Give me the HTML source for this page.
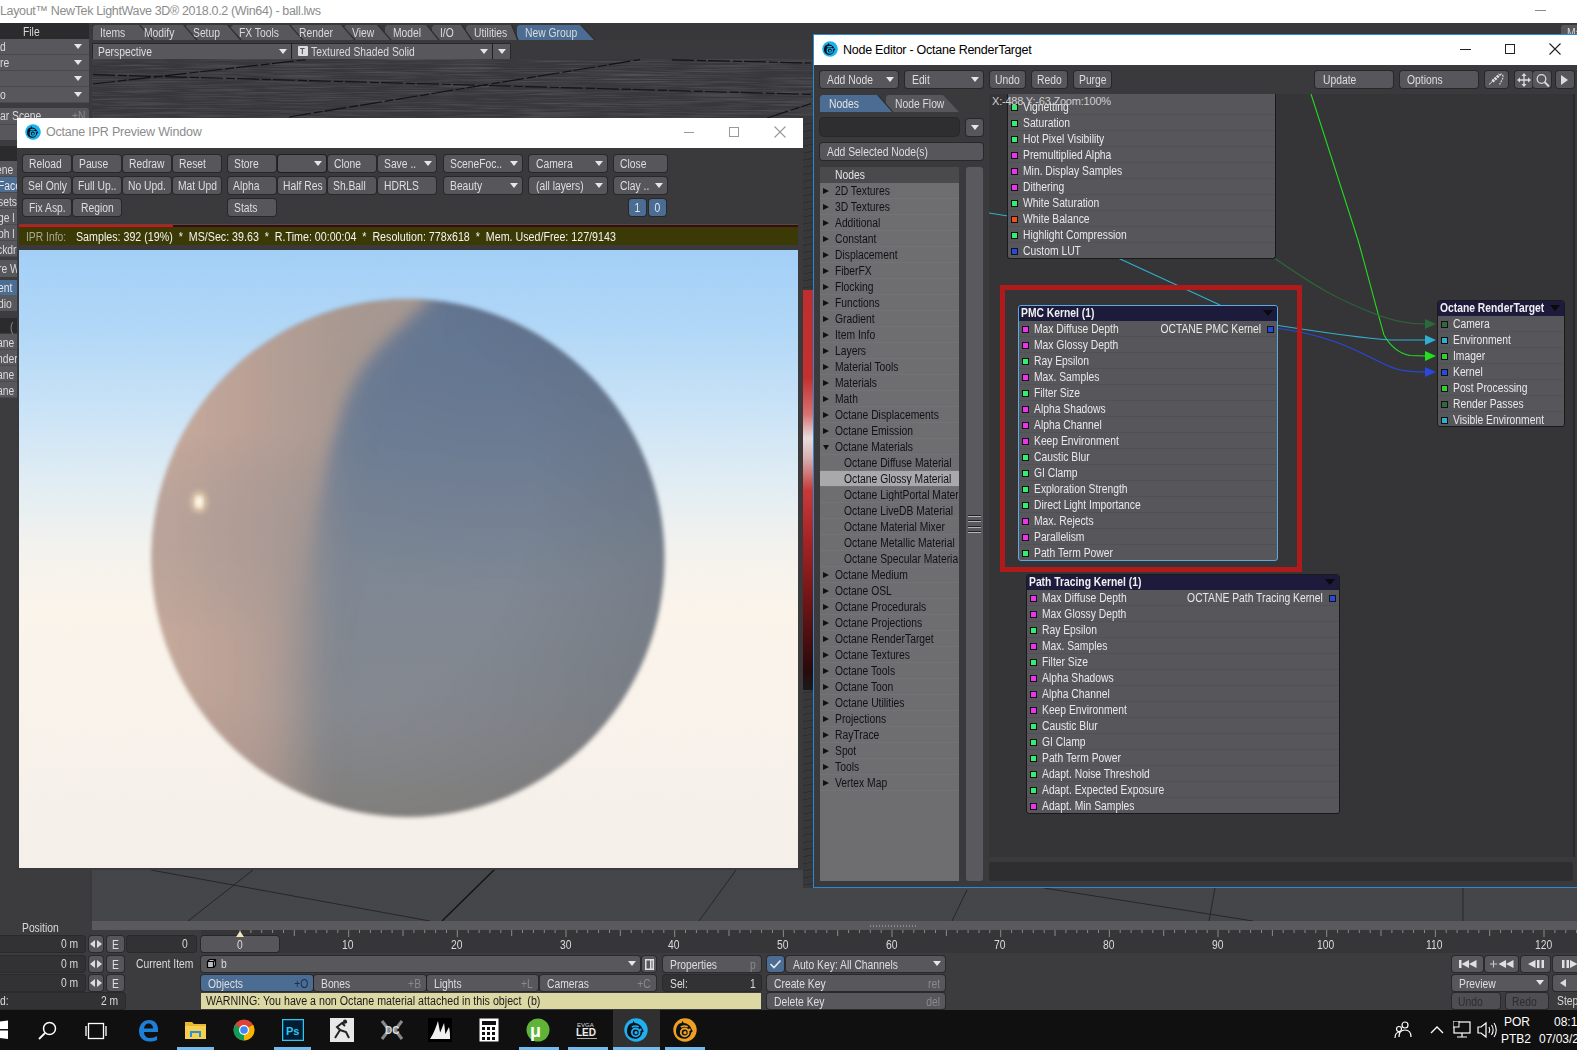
<!DOCTYPE html><html><head><meta charset="utf-8"><style>
*{margin:0;padding:0;box-sizing:border-box}
html,body{width:1577px;height:1050px;overflow:hidden;background:#3c3b3e;font-family:"Liberation Sans",sans-serif;font-size:12px;color:#dcdcdc;position:relative}
.ab{position:absolute}
.btn{position:absolute;background:#545457;border-radius:3px;white-space:nowrap;overflow:hidden;box-shadow:0 0 0 1px rgba(20,20,22,.45)}
.bl{position:absolute;top:0;white-space:nowrap}
.arr{position:absolute;width:0;height:0;border-left:4.5px solid transparent;border-right:4.5px solid transparent;border-top:5px solid #e6e6e6}
.t{position:absolute;white-space:nowrap;line-height:1}
</style></head><body>

<div class="ab" style="left:0px;top:0px;width:1577px;height:23px;background:#fff;"></div>
<div class="t" style="left:0px;top:5px;font-size:12.5px;color:#8c8c8c;letter-spacing:-0.35px">Layout™ NewTek LightWave 3D® 2018.0.2 (Win64) - ball.lws</div>
<div class="ab" style="left:1535px;top:10px;width:11px;height:1px;background:#8a8a8a;"></div>
<div class="ab" style="left:0px;top:23px;width:1577px;height:987px;background:#3c3b3e;"></div>
<div class="ab" style="left:89px;top:23px;width:1488px;height:17px;background:#38373a;"></div>
<div class="ab" style="left:517px;top:25px;width:79px;height:15px;background:#2e2d30;clip-path:polygon(0 2px,2px 0,64.5px 0,78.8px 100%,0 100%)"></div>
<div class="ab" style="left:517px;top:25px;width:79px;height:15px;background:#4b6c93;clip-path:polygon(0 2px,2px 0,63px 0,77px 100%,0 100%)"></div>
<div class="ab" style="left:466px;top:25px;width:53px;height:15px;background:#2e2d30;clip-path:polygon(0 2px,2px 0,46.5px 0,52.8px 100%,0 100%)"></div>
<div class="ab" style="left:466px;top:25px;width:53px;height:15px;background:#58575c;clip-path:polygon(0 2px,2px 0,45px 0,51px 100%,0 100%)"></div>
<div class="ab" style="left:432px;top:25px;width:41px;height:15px;background:#2e2d30;clip-path:polygon(0 2px,2px 0,30.5px 0,40.8px 100%,0 100%)"></div>
<div class="ab" style="left:432px;top:25px;width:41px;height:15px;background:#58575c;clip-path:polygon(0 2px,2px 0,29px 0,39px 100%,0 100%)"></div>
<div class="ab" style="left:385px;top:25px;width:55px;height:15px;background:#2e2d30;clip-path:polygon(0 2px,2px 0,42.5px 0,54.8px 100%,0 100%)"></div>
<div class="ab" style="left:385px;top:25px;width:55px;height:15px;background:#58575c;clip-path:polygon(0 2px,2px 0,41px 0,53px 100%,0 100%)"></div>
<div class="ab" style="left:344px;top:25px;width:48px;height:15px;background:#2e2d30;clip-path:polygon(0 2px,2px 0,34.5px 0,47.8px 100%,0 100%)"></div>
<div class="ab" style="left:344px;top:25px;width:48px;height:15px;background:#58575c;clip-path:polygon(0 2px,2px 0,33px 0,46px 100%,0 100%)"></div>
<div class="ab" style="left:290px;top:25px;width:66px;height:15px;background:#2e2d30;clip-path:polygon(0 2px,2px 0,52.5px 0,65.8px 100%,0 100%)"></div>
<div class="ab" style="left:290px;top:25px;width:66px;height:15px;background:#58575c;clip-path:polygon(0 2px,2px 0,51px 0,64px 100%,0 100%)"></div>
<div class="ab" style="left:231px;top:25px;width:73px;height:15px;background:#2e2d30;clip-path:polygon(0 2px,2px 0,59.5px 0,72.8px 100%,0 100%)"></div>
<div class="ab" style="left:231px;top:25px;width:73px;height:15px;background:#58575c;clip-path:polygon(0 2px,2px 0,58px 0,71px 100%,0 100%)"></div>
<div class="ab" style="left:185px;top:25px;width:57px;height:15px;background:#2e2d30;clip-path:polygon(0 2px,2px 0,43.5px 0,56.8px 100%,0 100%)"></div>
<div class="ab" style="left:185px;top:25px;width:57px;height:15px;background:#58575c;clip-path:polygon(0 2px,2px 0,42px 0,55px 100%,0 100%)"></div>
<div class="ab" style="left:136px;top:25px;width:62px;height:15px;background:#2e2d30;clip-path:polygon(0 2px,2px 0,48.5px 0,61.8px 100%,0 100%)"></div>
<div class="ab" style="left:136px;top:25px;width:62px;height:15px;background:#58575c;clip-path:polygon(0 2px,2px 0,47px 0,60px 100%,0 100%)"></div>
<div class="ab" style="left:93px;top:25px;width:61px;height:15px;background:#2e2d30;clip-path:polygon(0 2px,2px 0,47.5px 0,60.8px 100%,0 100%)"></div>
<div class="ab" style="left:93px;top:25px;width:61px;height:15px;background:#58575c;clip-path:polygon(0 2px,2px 0,46px 0,59px 100%,0 100%)"></div>
<div class="t" style="left:100px;top:27px;font-size:12px;color:#dadada;transform:scaleX(0.86);transform-origin:0 0;">Items</div>
<div class="t" style="left:144px;top:27px;font-size:12px;color:#dadada;transform:scaleX(0.86);transform-origin:0 0;">Modify</div>
<div class="t" style="left:193px;top:27px;font-size:12px;color:#dadada;transform:scaleX(0.86);transform-origin:0 0;">Setup</div>
<div class="t" style="left:239px;top:27px;font-size:12px;color:#dadada;transform:scaleX(0.86);transform-origin:0 0;">FX Tools</div>
<div class="t" style="left:299px;top:27px;font-size:12px;color:#dadada;transform:scaleX(0.86);transform-origin:0 0;">Render</div>
<div class="t" style="left:352px;top:27px;font-size:12px;color:#dadada;transform:scaleX(0.86);transform-origin:0 0;">View</div>
<div class="t" style="left:393px;top:27px;font-size:12px;color:#dadada;transform:scaleX(0.86);transform-origin:0 0;">Model</div>
<div class="t" style="left:440px;top:27px;font-size:12px;color:#dadada;transform:scaleX(0.86);transform-origin:0 0;">I/O</div>
<div class="t" style="left:474px;top:27px;font-size:12px;color:#dadada;transform:scaleX(0.86);transform-origin:0 0;">Utilities</div>
<div class="t" style="left:525px;top:27px;font-size:12px;color:#dadada;transform:scaleX(0.86);transform-origin:0 0;">New Group</div>
<div class="ab" style="left:1561px;top:25px;width:20px;height:9px;background:#58575c;border-radius:3px 0 0 0;overflow:hidden"><div class="t" style="left:6px;top:2px;font-size:12px;color:#dadada;transform:scaleX(.86);transform-origin:0 0">Ma</div></div>
<div class="ab" style="left:89px;top:40px;width:1488px;height:19px;background:#3a393c;"></div>
<div class="btn" style="left:93px;top:44px;width:198px;height:15px;background:#58575c;border-radius:0"><span class="bl" style="left:5px;line-height:15px;padding-top:1px;font-size:12px;color:#dedede;transform:scaleX(.86);transform-origin:0 0">Perspective</span><span class="arr" style="right:4px;top:5px"></span></div>
<div class="btn" style="left:292px;top:44px;width:200px;height:15px;background:#58575c;border-radius:0"><span class="arr" style="right:4px;top:5px"></span></div>
<div class="ab" style="left:298px;top:46px;width:10px;height:10px;background:#dcdcdc;border-radius:1px"></div>
<div class="t" style="left:300px;top:47px;font-size:9px;color:#58575c;transform:scaleX(0.86);transform-origin:0 0;font-weight:bold">T</div>
<div class="t" style="left:311px;top:46px;font-size:12px;color:#dadada;transform:scaleX(0.86);transform-origin:0 0;">Textured Shaded Solid</div>
<div class="btn" style="left:493px;top:44px;width:17px;height:15px;background:#58575c;border-radius:0"><span class="arr" style="right:4px;top:5px"></span></div>
<div class="ab" style="left:92px;top:59px;width:1485px;height:862px;background:linear-gradient(#333336 0px,#38393b 60px,#3d3e41 400px,#45464a 862px)"></div>
<svg class="ab" style="left:92px;top:59px" width="721" height="60"><defs><filter id="vt" x="0" y="0" width="100%" height="100%"><feTurbulence type="turbulence" baseFrequency="0.012 0.45" numOctaves="2" seed="7"/><feColorMatrix values="0 0 0 0 0.13  0 0 0 0 0.13  0 0 0 0 0.14  0 0 0 0.9 -0.1"/></filter></defs><rect width="721" height="60" fill="#38373b"/><rect width="721" height="60" filter="url(#vt)"/></svg>
<div class="ab" style="left:803px;top:118px;width:10px;height:770px;background:repeating-linear-gradient(170deg,#38383b 0 6px,#2e2e31 6px 7px)"></div>
<svg class="ab" style="left:92px;top:59px" width="721" height="60"><g stroke="#141416" stroke-width="1.2" fill="none" stroke-dasharray="22 3 9 2"><path d="M1 25 L215 0.6"/><path d="M1 15.7 L719 35.4"/><path d="M197 58 L548 0.6"/><path d="M580 0.8 L719 4"/><path d="M675 59 L719 44.6"/></g></svg>
<svg class="ab" style="left:92px;top:860px" width="1485" height="62"><g stroke="#26262a" stroke-width="1" fill="none"><path d="M59 10 L338 61"/><path d="M161 10 L96 61"/><path d="M644 10 L607 61"/><path d="M875 30 L860 61"/><path d="M952 28 L1161 61"/><path d="M1123 28 L1117 61"/><path d="M1371 28 L1371 61"/></g><g stroke="#111113" stroke-width="1.3" fill="none"><path d="M403 9 L350 61"/></g></svg>
<div class="ab" style="left:0px;top:23px;width:89px;height:16px;background:#2b2a2d;"></div>
<div class="t" style="left:23px;top:26px;font-size:12px;color:#d8d8d8;transform:scaleX(0.86);transform-origin:0 0;">File</div>
<div class="ab" style="left:0px;top:39px;width:89px;height:16px;background:#58575c;border-bottom:1px solid #4a494e"></div>
<div class="t" style="left:0px;top:41px;font-size:12px;color:#dadada;transform:scaleX(0.86);transform-origin:0 0;">d</div>
<span class="arr ab" style="left:74px;top:44px"></span>
<div class="ab" style="left:0px;top:55px;width:89px;height:16px;background:#58575c;border-bottom:1px solid #4a494e"></div>
<div class="t" style="left:0px;top:57px;font-size:12px;color:#dadada;transform:scaleX(0.86);transform-origin:0 0;">re</div>
<span class="arr ab" style="left:74px;top:60px"></span>
<div class="ab" style="left:0px;top:71px;width:89px;height:16px;background:#58575c;border-bottom:1px solid #4a494e"></div>
<div class="t" style="left:0px;top:73px;font-size:12px;color:#dadada;transform:scaleX(0.86);transform-origin:0 0;"></div>
<span class="arr ab" style="left:74px;top:76px"></span>
<div class="ab" style="left:0px;top:87px;width:89px;height:16px;background:#58575c;border-bottom:1px solid #4a494e"></div>
<div class="t" style="left:0px;top:89px;font-size:12px;color:#dadada;transform:scaleX(0.86);transform-origin:0 0;">o</div>
<span class="arr ab" style="left:74px;top:92px"></span>
<div class="ab" style="left:0px;top:103px;width:89px;height:5px;background:#3c3b3e;"></div>
<div class="ab" style="left:0px;top:108px;width:89px;height:16px;background:#58575c;border-radius:0 3px 3px 0"></div>
<div class="t" style="left:0px;top:110px;font-size:12px;color:#dadada;transform:scaleX(0.86);transform-origin:0 0;">ar Scene</div>
<div class="t" style="left:72px;top:110px;font-size:12px;color:#8a8a8c;transform:scaleX(0.86);transform-origin:0 0;">+N</div>
<div class="ab" style="left:0px;top:124px;width:89px;height:16px;background:#58575c;border-top:1px solid #4a494e"></div>
<div class="ab" style="left:0px;top:146px;width:17px;height:15px;background:#2b2a2d;"></div>
<div class="ab" style="left:0px;top:161px;width:17px;height:16px;background:#58575c;border-bottom:1px solid #4a494e"></div>
<div class="ab" style="left:0px;top:177px;width:17px;height:16px;background:#4b6c93;border-bottom:1px solid #4a494e"></div>
<div class="ab" style="left:0px;top:193px;width:17px;height:16px;background:#58575c;border-bottom:1px solid #4a494e"></div>
<div class="ab" style="left:0px;top:209px;width:17px;height:16px;background:#58575c;border-bottom:1px solid #4a494e"></div>
<div class="ab" style="left:0px;top:225px;width:17px;height:16px;background:#58575c;border-bottom:1px solid #4a494e"></div>
<div class="ab" style="left:0px;top:241px;width:17px;height:16px;background:#58575c;border-bottom:1px solid #4a494e"></div>
<div class="ab" style="left:0px;top:260px;width:17px;height:17px;background:#58575c;"></div>
<div class="ab" style="left:0px;top:280px;width:17px;height:15px;background:#4b6c93;"></div>
<div class="ab" style="left:0px;top:295px;width:17px;height:16px;background:#58575c;"></div>
<div class="ab" style="left:0px;top:318px;width:17px;height:15px;background:#2b2a2d;"></div>
<div class="ab" style="left:0px;top:334px;width:17px;height:16px;background:#58575c;border-bottom:1px solid #4a494e"></div>
<div class="ab" style="left:0px;top:350px;width:17px;height:16px;background:#58575c;border-bottom:1px solid #4a494e"></div>
<div class="ab" style="left:0px;top:366px;width:17px;height:16px;background:#58575c;border-bottom:1px solid #4a494e"></div>
<div class="ab" style="left:0px;top:382px;width:17px;height:16px;background:#58575c;border-bottom:1px solid #4a494e"></div>
<div class="ab" style="left:89px;top:23px;width:3px;height:898px;background:#3a393c;"></div>
<div class="t" style="left:-4px;top:164px;font-size:12px;color:#dadada;transform:scaleX(0.86);transform-origin:0 0;">ene</div>
<div class="t" style="left:-2px;top:180px;font-size:12px;color:#e8e8e8;transform:scaleX(0.86);transform-origin:0 0;">Face</div>
<div class="t" style="left:-2px;top:196px;font-size:12px;color:#dadada;transform:scaleX(0.86);transform-origin:0 0;">sets</div>
<div class="t" style="left:-2px;top:212px;font-size:12px;color:#dadada;transform:scaleX(0.86);transform-origin:0 0;">ge l</div>
<div class="t" style="left:-2px;top:228px;font-size:12px;color:#dadada;transform:scaleX(0.86);transform-origin:0 0;">ph l</div>
<div class="t" style="left:-3px;top:244px;font-size:12px;color:#dadada;transform:scaleX(0.86);transform-origin:0 0;">ckdr</div>
<div class="t" style="left:-2px;top:263px;font-size:12px;color:#dadada;transform:scaleX(0.86);transform-origin:0 0;">re W</div>
<div class="t" style="left:-2px;top:282px;font-size:12px;color:#e8e8e8;transform:scaleX(0.86);transform-origin:0 0;">ent</div>
<div class="t" style="left:-2px;top:298px;font-size:12px;color:#dadada;transform:scaleX(0.86);transform-origin:0 0;">dio</div>
<div class="t" style="left:10px;top:321px;font-size:12px;color:#8a8a8a;transform:scaleX(0.86);transform-origin:0 0;">(</div>
<div class="t" style="left:-3px;top:353px;font-size:12px;color:#dadada;transform:scaleX(0.86);transform-origin:0 0;">nder</div>
<div class="t" style="left:-3px;top:337px;font-size:12px;color:#dadada;transform:scaleX(0.86);transform-origin:0 0;">ane</div>
<div class="t" style="left:-3px;top:369px;font-size:12px;color:#dadada;transform:scaleX(0.86);transform-origin:0 0;">ane</div>
<div class="t" style="left:-3px;top:385px;font-size:12px;color:#dadada;transform:scaleX(0.86);transform-origin:0 0;">ane</div>
<div class="ab" style="left:92px;top:921px;width:1485px;height:9px;background:#5a595e;"></div>
<div class="ab" style="left:870px;top:925px;width:46px;height:2px;background:repeating-linear-gradient(90deg,#8a8a8c 0 1px,transparent 1px 3px)"></div>
<div class="ab" style="left:0px;top:930px;width:1577px;height:80px;background:#3c3b3e;"></div>
<div class="t" style="left:22px;top:922px;font-size:12px;color:#dadada;transform:scaleX(0.86);transform-origin:0 0;">Position</div>
<div class="btn" style="left:0px;top:936px;width:85px;height:16px;background:#323134;border-radius:0 3px 3px 0"></div>
<div class="t" style="left:61px;top:938px;font-size:12px;color:#dadada;transform:scaleX(0.86);transform-origin:0 0;">0 m</div>
<div class="btn" style="left:89px;top:936px;width:14px;height:16px;background:#57565b;"></div>
<svg class="ab" style="left:90px;top:940px" width="12" height="8"><path d="M0 4 L5 0 L5 8Z M12 4 L7 0 L7 8Z" fill="#dcdcdc"/></svg>
<div class="btn" style="left:107px;top:936px;width:17px;height:16px;background:#57565b;"><span class="bl" style="left:0;right:0;text-align:center;line-height:16px;padding-top:1px;font-size:12px;color:#dedede;transform:scaleX(.86)">E</span></div>
<div class="btn" style="left:0px;top:956px;width:85px;height:16px;background:#323134;border-radius:0 3px 3px 0"></div>
<div class="t" style="left:61px;top:958px;font-size:12px;color:#dadada;transform:scaleX(0.86);transform-origin:0 0;">0 m</div>
<div class="btn" style="left:89px;top:956px;width:14px;height:16px;background:#57565b;"></div>
<svg class="ab" style="left:90px;top:960px" width="12" height="8"><path d="M0 4 L5 0 L5 8Z M12 4 L7 0 L7 8Z" fill="#dcdcdc"/></svg>
<div class="btn" style="left:107px;top:956px;width:17px;height:16px;background:#57565b;"><span class="bl" style="left:0;right:0;text-align:center;line-height:16px;padding-top:1px;font-size:12px;color:#dedede;transform:scaleX(.86)">E</span></div>
<div class="btn" style="left:0px;top:975px;width:85px;height:16px;background:#323134;border-radius:0 3px 3px 0"></div>
<div class="t" style="left:61px;top:977px;font-size:12px;color:#dadada;transform:scaleX(0.86);transform-origin:0 0;">0 m</div>
<div class="btn" style="left:89px;top:975px;width:14px;height:16px;background:#57565b;"></div>
<svg class="ab" style="left:90px;top:979px" width="12" height="8"><path d="M0 4 L5 0 L5 8Z M12 4 L7 0 L7 8Z" fill="#dcdcdc"/></svg>
<div class="btn" style="left:107px;top:975px;width:17px;height:16px;background:#57565b;"><span class="bl" style="left:0;right:0;text-align:center;line-height:16px;padding-top:1px;font-size:12px;color:#dedede;transform:scaleX(.86)">E</span></div>
<div class="btn" style="left:127px;top:936px;width:69px;height:16px;background:#323134;"></div>
<div class="t" style="left:182px;top:938px;font-size:12px;color:#dadada;transform:scaleX(0.86);transform-origin:0 0;">0</div>
<div class="ab" style="left:201px;top:930px;width:1376px;height:23px;background:#363538;"></div>
<svg class="ab" style="left:0;top:0" width="1577" height="1010"><g stroke="#8a8a8c" stroke-width="1"><path d="M240.0 930 v7"/><path d="M250.9 930 v3"/><path d="M261.7 930 v3"/><path d="M272.6 930 v3"/><path d="M283.5 930 v3"/><path d="M294.3 930 v6"/><path d="M305.2 930 v3"/><path d="M316.1 930 v3"/><path d="M326.9 930 v3"/><path d="M337.8 930 v3"/><path d="M348.7 930 v7"/><path d="M359.5 930 v3"/><path d="M370.4 930 v3"/><path d="M381.3 930 v3"/><path d="M392.1 930 v3"/><path d="M403.0 930 v6"/><path d="M413.9 930 v3"/><path d="M424.7 930 v3"/><path d="M435.6 930 v3"/><path d="M446.5 930 v3"/><path d="M457.3 930 v7"/><path d="M468.2 930 v3"/><path d="M479.1 930 v3"/><path d="M489.9 930 v3"/><path d="M500.8 930 v3"/><path d="M511.7 930 v6"/><path d="M522.5 930 v3"/><path d="M533.4 930 v3"/><path d="M544.3 930 v3"/><path d="M555.1 930 v3"/><path d="M566.0 930 v7"/><path d="M576.9 930 v3"/><path d="M587.7 930 v3"/><path d="M598.6 930 v3"/><path d="M609.5 930 v3"/><path d="M620.3 930 v6"/><path d="M631.2 930 v3"/><path d="M642.1 930 v3"/><path d="M652.9 930 v3"/><path d="M663.8 930 v3"/><path d="M674.7 930 v7"/><path d="M685.5 930 v3"/><path d="M696.4 930 v3"/><path d="M707.3 930 v3"/><path d="M718.1 930 v3"/><path d="M729.0 930 v6"/><path d="M739.9 930 v3"/><path d="M750.7 930 v3"/><path d="M761.6 930 v3"/><path d="M772.5 930 v3"/><path d="M783.4 930 v7"/><path d="M794.2 930 v3"/><path d="M805.1 930 v3"/><path d="M816.0 930 v3"/><path d="M826.8 930 v3"/><path d="M837.7 930 v6"/><path d="M848.6 930 v3"/><path d="M859.4 930 v3"/><path d="M870.3 930 v3"/><path d="M881.2 930 v3"/><path d="M892.0 930 v7"/><path d="M902.9 930 v3"/><path d="M913.8 930 v3"/><path d="M924.6 930 v3"/><path d="M935.5 930 v3"/><path d="M946.4 930 v6"/><path d="M957.2 930 v3"/><path d="M968.1 930 v3"/><path d="M979.0 930 v3"/><path d="M989.8 930 v3"/><path d="M1000.7 930 v7"/><path d="M1011.6 930 v3"/><path d="M1022.4 930 v3"/><path d="M1033.3 930 v3"/><path d="M1044.2 930 v3"/><path d="M1055.0 930 v6"/><path d="M1065.9 930 v3"/><path d="M1076.8 930 v3"/><path d="M1087.6 930 v3"/><path d="M1098.5 930 v3"/><path d="M1109.4 930 v7"/><path d="M1120.2 930 v3"/><path d="M1131.1 930 v3"/><path d="M1142.0 930 v3"/><path d="M1152.8 930 v3"/><path d="M1163.7 930 v6"/><path d="M1174.6 930 v3"/><path d="M1185.4 930 v3"/><path d="M1196.3 930 v3"/><path d="M1207.2 930 v3"/><path d="M1218.0 930 v7"/><path d="M1228.9 930 v3"/><path d="M1239.8 930 v3"/><path d="M1250.6 930 v3"/><path d="M1261.5 930 v3"/><path d="M1272.4 930 v6"/><path d="M1283.2 930 v3"/><path d="M1294.1 930 v3"/><path d="M1305.0 930 v3"/><path d="M1315.8 930 v3"/><path d="M1326.7 930 v7"/><path d="M1337.6 930 v3"/><path d="M1348.4 930 v3"/><path d="M1359.3 930 v3"/><path d="M1370.2 930 v3"/><path d="M1381.0 930 v6"/><path d="M1391.9 930 v3"/><path d="M1402.8 930 v3"/><path d="M1413.6 930 v3"/><path d="M1424.5 930 v3"/><path d="M1435.4 930 v7"/><path d="M1446.2 930 v3"/><path d="M1457.1 930 v3"/><path d="M1468.0 930 v3"/><path d="M1478.8 930 v3"/><path d="M1489.7 930 v6"/><path d="M1500.6 930 v3"/><path d="M1511.4 930 v3"/><path d="M1522.3 930 v3"/><path d="M1533.2 930 v3"/><path d="M1544.0 930 v7"/><path d="M1554.9 930 v3"/><path d="M1565.8 930 v3"/><path d="M1576.6 930 v3"/></g></svg>
<div class="btn" style="left:201px;top:936px;width:78px;height:16px;background:#57565b;"></div>
<svg class="ab" style="left:236px;top:931px" width="8" height="6"><path d="M4 0 L8 6 L0 6Z" fill="#f0e6b8"/></svg>
<div class="t" style="left:237px;top:939px;font-size:12px;color:#dadada;transform:scaleX(0.86);transform-origin:0 0;">0</div>
<div class="t" style="left:342px;top:939px;font-size:12px;color:#dadada;transform:scaleX(0.86);transform-origin:0 0;">10</div>
<div class="t" style="left:451px;top:939px;font-size:12px;color:#dadada;transform:scaleX(0.86);transform-origin:0 0;">20</div>
<div class="t" style="left:560px;top:939px;font-size:12px;color:#dadada;transform:scaleX(0.86);transform-origin:0 0;">30</div>
<div class="t" style="left:668px;top:939px;font-size:12px;color:#dadada;transform:scaleX(0.86);transform-origin:0 0;">40</div>
<div class="t" style="left:777px;top:939px;font-size:12px;color:#dadada;transform:scaleX(0.86);transform-origin:0 0;">50</div>
<div class="t" style="left:886px;top:939px;font-size:12px;color:#dadada;transform:scaleX(0.86);transform-origin:0 0;">60</div>
<div class="t" style="left:994px;top:939px;font-size:12px;color:#dadada;transform:scaleX(0.86);transform-origin:0 0;">70</div>
<div class="t" style="left:1103px;top:939px;font-size:12px;color:#dadada;transform:scaleX(0.86);transform-origin:0 0;">80</div>
<div class="t" style="left:1212px;top:939px;font-size:12px;color:#dadada;transform:scaleX(0.86);transform-origin:0 0;">90</div>
<div class="t" style="left:1317px;top:939px;font-size:12px;color:#dadada;transform:scaleX(0.86);transform-origin:0 0;">100</div>
<div class="t" style="left:1426px;top:939px;font-size:12px;color:#dadada;transform:scaleX(0.86);transform-origin:0 0;">110</div>
<div class="t" style="left:1535px;top:939px;font-size:12px;color:#dadada;transform:scaleX(0.86);transform-origin:0 0;">120</div>
<div class="t" style="left:136px;top:958px;font-size:12px;color:#dadada;transform:scaleX(0.86);transform-origin:0 0;">Current Item</div>
<div class="btn" style="left:201px;top:956px;width:439px;height:16px;background:#58575c;"><span class="arr" style="right:4px;top:5px"></span></div>
<svg class="ab" style="left:206px;top:958px" width="11" height="11"><path d="M1.5 3.5 H7.5 V9.5 H1.5Z M1.5 3.5 L3.5 1.5 H9.5 V7.5 L7.5 9.5 M7.5 3.5 L9.5 1.5" fill="#bdbdbd" stroke="#000" stroke-width="1.2"/></svg>
<div class="t" style="left:221px;top:958px;font-size:12px;color:#dadada;transform:scaleX(0.86);transform-origin:0 0;">b</div>
<div class="btn" style="left:642px;top:956px;width:14px;height:16px;background:#58575c;"></div>
<svg class="ab" style="left:645px;top:959px" width="9" height="11"><rect x="0.75" y="0.75" width="7.5" height="9.5" fill="none" stroke="#e0e0e0" stroke-width="1.5"/><rect x="5" y="1" width="1.5" height="9" fill="#e0e0e0"/></svg>
<div class="btn" style="left:663px;top:956px;width:98px;height:16px;background:#58575c;"><span class="bl" style="left:7px;line-height:16px;padding-top:1px;font-size:12px;color:#dedede;transform:scaleX(.86);transform-origin:0 0">Properties</span><span class="bl" style="right:5px;line-height:16px;padding-top:1px;font-size:12px;color:#8a8a8c;transform:scaleX(.86);transform-origin:100% 0">p</span></div>
<div class="btn" style="left:767px;top:956px;width:17px;height:16px;background:#4b6c93;"></div>
<svg class="ab" style="left:769px;top:959px" width="13" height="10"><path d="M1.5 5 L5 8.5 L11.5 1.5" stroke="#e8e8e8" stroke-width="1.6" fill="none"/></svg>
<div class="btn" style="left:786px;top:956px;width:159px;height:16px;background:#58575c;"><span class="bl" style="left:7px;line-height:16px;padding-top:1px;font-size:12px;color:#dedede;transform:scaleX(.86);transform-origin:0 0">Auto Key: All Channels</span><span class="arr" style="right:4px;top:5px"></span></div>
<div class="btn" style="left:201px;top:975px;width:112px;height:16px;background:#4b6c93;"><span class="bl" style="left:7px;line-height:16px;padding-top:1px;font-size:12px;color:#dedede;transform:scaleX(.86);transform-origin:0 0">Objects</span><span class="bl" style="right:5px;line-height:16px;padding-top:1px;font-size:12px;color:#1c2c4c;transform:scaleX(.86);transform-origin:100% 0">+O</span></div>
<div class="btn" style="left:314px;top:975px;width:112px;height:16px;background:#58575c;"><span class="bl" style="left:7px;line-height:16px;padding-top:1px;font-size:12px;color:#dedede;transform:scaleX(.86);transform-origin:0 0">Bones</span><span class="bl" style="right:5px;line-height:16px;padding-top:1px;font-size:12px;color:#8a8a8c;transform:scaleX(.86);transform-origin:100% 0">+B</span></div>
<div class="btn" style="left:427px;top:975px;width:111px;height:16px;background:#58575c;"><span class="bl" style="left:7px;line-height:16px;padding-top:1px;font-size:12px;color:#dedede;transform:scaleX(.86);transform-origin:0 0">Lights</span><span class="bl" style="right:5px;line-height:16px;padding-top:1px;font-size:12px;color:#8a8a8c;transform:scaleX(.86);transform-origin:100% 0">+L</span></div>
<div class="btn" style="left:540px;top:975px;width:116px;height:16px;background:#58575c;"><span class="bl" style="left:7px;line-height:16px;padding-top:1px;font-size:12px;color:#dedede;transform:scaleX(.86);transform-origin:0 0">Cameras</span><span class="bl" style="right:5px;line-height:16px;padding-top:1px;font-size:12px;color:#8a8a8c;transform:scaleX(.86);transform-origin:100% 0">+C</span></div>
<div class="btn" style="left:663px;top:975px;width:98px;height:16px;background:#323134;"><span class="bl" style="left:7px;line-height:16px;padding-top:1px;font-size:12px;color:#dedede;transform:scaleX(.86);transform-origin:0 0">Sel:</span><span class="bl" style="right:5px;line-height:16px;padding-top:1px;font-size:12px;color:#dadada;transform:scaleX(.86);transform-origin:100% 0">1</span></div>
<div class="btn" style="left:767px;top:975px;width:178px;height:16px;background:#58575c;"><span class="bl" style="left:7px;line-height:16px;padding-top:1px;font-size:12px;color:#dedede;transform:scaleX(.86);transform-origin:0 0">Create Key</span><span class="bl" style="right:5px;line-height:16px;padding-top:1px;font-size:12px;color:#8a8a8c;transform:scaleX(.86);transform-origin:100% 0">ret</span></div>
<div class="btn" style="left:0px;top:993px;width:125px;height:16px;background:#323134;border-radius:0 3px 3px 0"></div>
<div class="t" style="left:0px;top:995px;font-size:12px;color:#dadada;transform:scaleX(0.86);transform-origin:0 0;">d:</div>
<div class="t" style="left:101px;top:995px;font-size:12px;color:#dadada;transform:scaleX(0.86);transform-origin:0 0;">2 m</div>
<div class="ab" style="left:201px;top:993px;width:560px;height:16px;background:#dcd8a4;"></div>
<div class="t" style="left:206px;top:995px;font-size:12px;color:#1a1a1a;transform:scaleX(0.89);transform-origin:0 0;">WARNING: You have a non Octane material attached in this object &nbsp;(b)</div>
<div class="btn" style="left:767px;top:993px;width:178px;height:16px;background:#58575c;"><span class="bl" style="left:7px;line-height:16px;padding-top:1px;font-size:12px;color:#dedede;transform:scaleX(.86);transform-origin:0 0">Delete Key</span><span class="bl" style="right:5px;line-height:16px;padding-top:1px;font-size:12px;color:#8a8a8c;transform:scaleX(.86);transform-origin:100% 0">del</span></div>
<div class="btn" style="left:1452px;top:956px;width:31px;height:16px;background:#58575c;"></div>
<div class="btn" style="left:1485px;top:956px;width:33px;height:16px;background:#58575c;"></div>
<div class="btn" style="left:1521px;top:956px;width:29px;height:16px;background:#58575c;"></div>
<div class="btn" style="left:1553px;top:956px;width:30px;height:16px;background:#58575c;"></div>
<svg class="ab" style="left:1452px;top:956px" width="125" height="16"><g fill="#e0e0e0"><rect x="7" y="4" width="2.5" height="8"/><path d="M9.5 8 L17 4 L17 12Z M17 8 L24.5 4 L24.5 12Z"/><path d="M38 8 h7 M41.5 4.5 v7" stroke="#c8c8c8" stroke-width="1.1"/><path d="M46.5 8 L54 4 L54 12Z M54 8 L61.5 4 L61.5 12Z"/><path d="M76 8 L83.5 4 L83.5 12Z"/><rect x="85" y="4" width="2.5" height="8"/><rect x="89.5" y="4" width="2.5" height="8"/><rect x="110" y="4" width="2.5" height="8"/><rect x="114.5" y="4" width="2.5" height="8"/><path d="M118 4 L125.5 8 L118 12Z"/></g></svg>
<div class="btn" style="left:1452px;top:975px;width:96px;height:16px;background:#58575c;"><span class="bl" style="left:7px;line-height:16px;padding-top:1px;font-size:12px;color:#dedede;transform:scaleX(.86);transform-origin:0 0">Preview</span><span class="arr" style="right:4px;top:5px"></span></div>
<div class="btn" style="left:1553px;top:975px;width:30px;height:16px;background:#58575c;"></div>
<svg class="ab" style="left:1560px;top:979px" width="10" height="8"><path d="M0 4 L6 0 L6 8Z" fill="#dcdcdc"/></svg>
<div class="btn" style="left:1452px;top:993px;width:48px;height:16px;background:#4f4e53;"><span class="bl" style="left:6px;line-height:16px;padding-top:1px;font-size:12px;color:#2c2c36;transform:scaleX(.86);transform-origin:0 0">Undo</span></div>
<div class="btn" style="left:1506px;top:993px;width:42px;height:16px;background:#4f4e53;"><span class="bl" style="left:6px;line-height:16px;padding-top:1px;font-size:12px;color:#2c2c36;transform:scaleX(.86);transform-origin:0 0">Redo</span></div>
<div class="t" style="left:1557px;top:995px;font-size:12px;color:#dadada;transform:scaleX(0.86);transform-origin:0 0;">Step</div>
<div class="ab" style="left:17px;top:118px;width:786px;height:752px;background:#3a3a3c;"></div>
<div class="ab" style="left:17px;top:118px;width:786px;height:30px;background:#fff;"></div>
<svg class="ab" style="left:25px;top:124px" width="16" height="16" viewBox="0 0 16 16"><circle cx="8" cy="8" r="7.8" fill="#18b4ee"/><path d="M2.6 5.6 C3.4 4.2 4.6 3.4 5.8 3.4 L6.2 1.8 L7.2 3.4 C9.5 3.6 11.5 5 12.2 7 L13.2 8.8 L12.2 9.6 C11.6 12.2 10 13.8 7.6 13.8 C4.6 13.8 2 12 2 9 C2 7.8 2.2 6.6 2.6 5.6Z" fill="#07121c"/><circle cx="7.8" cy="9.6" r="2.6" fill="none" stroke="#18b4ee" stroke-width="1.2"/><circle cx="8" cy="9.8" r="1.1" fill="#18b4ee"/><path d="M5.2 6 C6.6 5.2 8.4 5.2 9.8 5.8" stroke="#18b4ee" stroke-width="1.1" fill="none"/><circle cx="11" cy="7.8" r="0.8" fill="#18b4ee"/></svg>
<div class="t" style="left:46px;top:126px;font-size:12.5px;color:#8c8c8c;letter-spacing:-0.2px">Octane IPR Preview Window</div>
<div class="ab" style="left:684px;top:132px;width:10px;height:1px;background:#999;"></div>
<div class="ab" style="left:729px;top:127px;width:10px;height:10px;background:transparent;border:1px solid #999"></div>
<svg class="ab" style="left:774px;top:126px" width="12" height="12"><path d="M0.5 0.5 L11.5 11.5 M11.5 0.5 L0.5 11.5" stroke="#999" stroke-width="1.1"/></svg>
<div class="btn" style="left:23px;top:155px;width:48px;height:17px;background:#57565b;"><span class="bl" style="left:6px;line-height:17px;padding-top:1px;font-size:12px;color:#dedede;transform:scaleX(.86);transform-origin:0 0">Reload</span></div>
<div class="btn" style="left:73px;top:155px;width:48px;height:17px;background:#57565b;"><span class="bl" style="left:6px;line-height:17px;padding-top:1px;font-size:12px;color:#dedede;transform:scaleX(.86);transform-origin:0 0">Pause</span></div>
<div class="btn" style="left:123px;top:155px;width:48px;height:17px;background:#57565b;"><span class="bl" style="left:6px;line-height:17px;padding-top:1px;font-size:12px;color:#dedede;transform:scaleX(.86);transform-origin:0 0">Redraw</span></div>
<div class="btn" style="left:173px;top:155px;width:48px;height:17px;background:#57565b;"><span class="bl" style="left:6px;line-height:17px;padding-top:1px;font-size:12px;color:#dedede;transform:scaleX(.86);transform-origin:0 0">Reset</span></div>
<div class="btn" style="left:228px;top:155px;width:48px;height:17px;background:#57565b;"><span class="bl" style="left:6px;line-height:17px;padding-top:1px;font-size:12px;color:#dedede;transform:scaleX(.86);transform-origin:0 0">Store</span></div>
<div class="btn" style="left:278px;top:155px;width:48px;height:17px;background:#57565b;"></div>
<div class="btn" style="left:328px;top:155px;width:48px;height:17px;background:#57565b;"><span class="bl" style="left:6px;line-height:17px;padding-top:1px;font-size:12px;color:#dedede;transform:scaleX(.86);transform-origin:0 0">Clone</span></div>
<div class="btn" style="left:278px;top:155px;width:48px;height:17px;background:#57565b;"><span class="arr" style="right:4px;top:6px"></span></div>
<div class="btn" style="left:378px;top:155px;width:58px;height:17px;background:#57565b;"><span class="bl" style="left:6px;line-height:17px;padding-top:1px;font-size:12px;color:#dedede;transform:scaleX(.86);transform-origin:0 0">Save ..</span><span class="arr" style="right:4px;top:6px"></span></div>
<div class="btn" style="left:444px;top:155px;width:78px;height:17px;background:#57565b;"><span class="bl" style="left:6px;line-height:17px;padding-top:1px;font-size:12px;color:#dedede;transform:scaleX(.86);transform-origin:0 0">SceneFoc..</span><span class="arr" style="right:4px;top:6px"></span></div>
<div class="btn" style="left:529px;top:155px;width:78px;height:17px;background:#57565b;"><span class="bl" style="left:7px;line-height:17px;padding-top:1px;font-size:12px;color:#dedede;transform:scaleX(.86);transform-origin:0 0">Camera</span><span class="arr" style="right:4px;top:6px"></span></div>
<div class="btn" style="left:614px;top:155px;width:53px;height:17px;background:#57565b;"><span class="bl" style="left:6px;line-height:17px;padding-top:1px;font-size:12px;color:#dedede;transform:scaleX(.86);transform-origin:0 0">Close</span></div>
<div class="btn" style="left:23px;top:177px;width:48px;height:17px;background:#57565b;"><span class="bl" style="left:5px;line-height:17px;padding-top:1px;font-size:12px;color:#dedede;transform:scaleX(.86);transform-origin:0 0">Sel Only</span></div>
<div class="btn" style="left:73px;top:177px;width:48px;height:17px;background:#57565b;"><span class="bl" style="left:5px;line-height:17px;padding-top:1px;font-size:12px;color:#dedede;transform:scaleX(.86);transform-origin:0 0">Full Up..</span></div>
<div class="btn" style="left:123px;top:177px;width:48px;height:17px;background:#57565b;"><span class="bl" style="left:5px;line-height:17px;padding-top:1px;font-size:12px;color:#dedede;transform:scaleX(.86);transform-origin:0 0">No Upd.</span></div>
<div class="btn" style="left:173px;top:177px;width:48px;height:17px;background:#57565b;"><span class="bl" style="left:5px;line-height:17px;padding-top:1px;font-size:12px;color:#dedede;transform:scaleX(.86);transform-origin:0 0">Mat Upd</span></div>
<div class="btn" style="left:228px;top:177px;width:48px;height:17px;background:#57565b;"><span class="bl" style="left:5px;line-height:17px;padding-top:1px;font-size:12px;color:#dedede;transform:scaleX(.86);transform-origin:0 0">Alpha</span></div>
<div class="btn" style="left:278px;top:177px;width:48px;height:17px;background:#57565b;"><span class="bl" style="left:5px;line-height:17px;padding-top:1px;font-size:12px;color:#dedede;transform:scaleX(.86);transform-origin:0 0">Half Res</span></div>
<div class="btn" style="left:328px;top:177px;width:48px;height:17px;background:#57565b;"><span class="bl" style="left:5px;line-height:17px;padding-top:1px;font-size:12px;color:#dedede;transform:scaleX(.86);transform-origin:0 0">Sh.Ball</span></div>
<div class="btn" style="left:378px;top:177px;width:58px;height:17px;background:#57565b;"><span class="bl" style="left:6px;line-height:17px;padding-top:1px;font-size:12px;color:#dedede;transform:scaleX(.86);transform-origin:0 0">HDRLS</span></div>
<div class="btn" style="left:444px;top:177px;width:78px;height:17px;background:#57565b;"><span class="bl" style="left:6px;line-height:17px;padding-top:1px;font-size:12px;color:#dedede;transform:scaleX(.86);transform-origin:0 0">Beauty</span><span class="arr" style="right:4px;top:6px"></span></div>
<div class="btn" style="left:529px;top:177px;width:78px;height:17px;background:#57565b;"><span class="bl" style="left:7px;line-height:17px;padding-top:1px;font-size:12px;color:#dedede;transform:scaleX(.86);transform-origin:0 0">(all layers)</span><span class="arr" style="right:4px;top:6px"></span></div>
<div class="btn" style="left:614px;top:177px;width:53px;height:17px;background:#57565b;"><span class="bl" style="left:6px;line-height:17px;padding-top:1px;font-size:12px;color:#dedede;transform:scaleX(.86);transform-origin:0 0">Clay ..</span><span class="arr" style="right:4px;top:6px"></span></div>
<div class="btn" style="left:23px;top:199px;width:48px;height:17px;background:#57565b;"><span class="bl" style="left:6px;line-height:17px;padding-top:1px;font-size:12px;color:#dedede;transform:scaleX(.86);transform-origin:0 0">Fix Asp.</span></div>
<div class="btn" style="left:73px;top:199px;width:48px;height:17px;background:#57565b;"><span class="bl" style="left:8px;line-height:17px;padding-top:1px;font-size:12px;color:#dedede;transform:scaleX(.86);transform-origin:0 0">Region</span></div>
<div class="btn" style="left:228px;top:199px;width:48px;height:17px;background:#57565b;"><span class="bl" style="left:6px;line-height:17px;padding-top:1px;font-size:12px;color:#dedede;transform:scaleX(.86);transform-origin:0 0">Stats</span></div>
<div class="btn" style="left:629px;top:199px;width:17px;height:17px;background:#4b6c93;"><span class="bl" style="left:0;right:0;text-align:center;line-height:17px;padding-top:1px;font-size:12px;color:#e8e8e8;transform:scaleX(.86)">1</span></div>
<div class="btn" style="left:649px;top:199px;width:17px;height:17px;background:#4b6c93;"><span class="bl" style="left:0;right:0;text-align:center;line-height:17px;padding-top:1px;font-size:12px;color:#e8e8e8;transform:scaleX(.86)">0</span></div>
<div class="ab" style="left:19px;top:224px;width:779px;height:1px;background:#4c4b50;"></div>
<div class="ab" style="left:19px;top:225px;width:779px;height:2px;background:#3c0a0a;"></div>
<div class="ab" style="left:19px;top:225px;width:154px;height:2px;background:#e01010;"></div>
<div class="ab" style="left:19px;top:227px;width:779px;height:18px;background:#3b3a06;"></div>
<div class="t" style="left:26px;top:231px;font-size:12px;color:#a8a890;transform:scaleX(0.86);transform-origin:0 0;">IPR Info:</div>
<div class="t" style="left:76px;top:231px;font-size:12px;color:#f4f4ee;transform:scaleX(0.89);transform-origin:0 0;">Samples: 392 (19%) &nbsp;* &nbsp;MS/Sec: 39.63 &nbsp;* &nbsp;R.Time: 00:00:04 &nbsp;* &nbsp;Resolution: 778x618 &nbsp;* &nbsp;Mem. Used/Free: 127/9143</div>
<div class="ab" style="left:19px;top:245px;width:779px;height:5px;background:#3a3a3c;"></div>
<svg class="ab" style="left:19px;top:250px" width="779" height="618" viewBox="0 0 779 618">
<defs>
<linearGradient id="sky" x1="0" y1="0" x2="0" y2="1">
<stop offset="0" stop-color="#a2cff8"/><stop offset="0.12" stop-color="#b0d7f8"/><stop offset="0.25" stop-color="#c8e3f8"/>
<stop offset="0.38" stop-color="#e2eef4"/><stop offset="0.48" stop-color="#f4f3ef"/><stop offset="0.58" stop-color="#fcf5ec"/><stop offset="0.8" stop-color="#f9f3ec"/><stop offset="1" stop-color="#f5f0ea"/></linearGradient>
<linearGradient id="cool" x1="0" y1="0" x2="0" y2="1">
<stop offset="0" stop-color="#627692"/><stop offset="0.25" stop-color="#6e7d93"/><stop offset="0.55" stop-color="#7d8692"/><stop offset="0.8" stop-color="#84878d"/><stop offset="1" stop-color="#88857f"/></linearGradient>
<linearGradient id="warm" gradientUnits="userSpaceOnUse" x1="130" y1="0" x2="330" y2="0">
<stop offset="0" stop-color="#cbab9b"/><stop offset="0.45" stop-color="#bba196"/><stop offset="1" stop-color="#a69790"/></linearGradient>
<radialGradient id="rim" cx="0.32" cy="0.38" r="0.75">
<stop offset="0.55" stop-color="#34363a" stop-opacity="0"/><stop offset="0.95" stop-color="#34363a" stop-opacity="0.14"/></radialGradient>
<radialGradient id="rtop" cx="0.62" cy="0.12" r="0.45">
<stop offset="0" stop-color="#55698a" stop-opacity="0.35"/><stop offset="1" stop-color="#4e6890" stop-opacity="0"/></radialGradient>
<linearGradient id="gtop" x1="0" y1="0" x2="0" y2="1"><stop offset="0" stop-color="#fff"/><stop offset="0.3" stop-color="#fff"/><stop offset="0.62" stop-color="#000"/></linearGradient>
<linearGradient id="gbot" x1="0" y1="0" x2="0" y2="1"><stop offset="0.3" stop-color="#000"/><stop offset="0.62" stop-color="#fff"/></linearGradient>
<mask id="mtop" maskUnits="userSpaceOnUse" x="0" y="0" width="779" height="618"><rect width="779" height="618" fill="url(#gtop)"/></mask>
<mask id="mbot" maskUnits="userSpaceOnUse" x="0" y="0" width="779" height="618"><rect width="779" height="618" fill="url(#gbot)"/></mask>
<clipPath id="sc"><ellipse cx="389" cy="308" rx="256.5" ry="259"/></clipPath>
<filter id="b20" x="-50%" y="-50%" width="200%" height="200%"><feGaussianBlur stdDeviation="20"/></filter>
<filter id="b8" x="-50%" y="-50%" width="200%" height="200%"><feGaussianBlur stdDeviation="7"/></filter>
<filter id="b26" x="-50%" y="-50%" width="200%" height="200%"><feGaussianBlur stdDeviation="26"/></filter>
<filter id="b2" x="-10%" y="-10%" width="120%" height="120%"><feGaussianBlur stdDeviation="2.2"/></filter>
<filter id="b3" x="-100%" y="-100%" width="300%" height="300%"><feGaussianBlur stdDeviation="3"/></filter>
<filter id="noise" x="0" y="0" width="100%" height="100%"><feTurbulence type="fractalNoise" baseFrequency="0.9" numOctaves="1" seed="3"/><feColorMatrix values="0 0 0 0 0.55  0 0 0 0 0.55  0 0 0 0 0.55  0 0 0 0.05 0"/></filter>
</defs>
<rect width="779" height="618" fill="url(#sky)"/>
<g filter="url(#b2)">
<g clip-path="url(#sc)">
<rect x="100" y="30" width="600" height="560" fill="url(#cool)"/>
<rect x="100" y="30" width="600" height="560" fill="url(#rtop)"/>
<g mask="url(#mtop)"><path d="M0 -40 L470 -40 L408 51 Q365 90 347 112 Q325 145 319 173 Q308 205 304 234 Q296 265 292 295 Q286 325 283 356 Q279 385 277 417 L272 660 L0 660 Z" fill="url(#warm)" filter="url(#b8)"/></g>
<g mask="url(#mbot)"><path d="M0 -40 L470 -40 L408 51 Q365 90 347 112 Q325 145 319 173 Q308 205 304 234 Q296 265 292 295 Q286 325 283 356 Q279 385 277 417 L272 660 L0 660 Z" fill="url(#warm)" filter="url(#b26)" opacity="0.95"/></g>
<path d="M0 -40 L470 -40 L408 51 Q365 90 347 112 Q325 145 319 173 Q308 205 304 234 Q296 265 292 295 Q286 325 283 356 Q279 385 277 417 L272 660 L0 660 Z" fill="url(#warm)" filter="url(#b20)" opacity="0.35"/>
<ellipse cx="389" cy="308" rx="257" ry="259" fill="url(#rim)"/>
</g></g>
<ellipse cx="180" cy="252" rx="7" ry="10" fill="#ffe8c0" opacity="0.8" filter="url(#b3)"/>
<ellipse cx="180" cy="252" rx="3.5" ry="5.5" fill="#fffbf0" filter="url(#b2)"/>
<rect width="779" height="618" filter="url(#noise)"/>
</svg>
<div class="ab" style="left:803px;top:290px;width:10px;height:400px;background:linear-gradient(#bf2e2e 0%,#c43030 22%,#d87070 31%,#e8dcdc 37%,#d8b0b0 42%,#c83a3a 50%,#a82424 62%,#701414 78%,#2a0a0a 95%,#1a1a1c 100%)"></div>
<div class="ab" style="left:813px;top:34px;width:764px;height:854px;background:#3a3a3c;border:1px solid #2a8ad8;border-right:none"></div>
<div class="ab" style="left:814px;top:35px;width:763px;height:30px;background:#fff;"></div>
<svg class="ab" style="left:822px;top:41px" width="16" height="16" viewBox="0 0 16 16"><circle cx="8" cy="8" r="7.8" fill="#18b4ee"/><path d="M2.6 5.6 C3.4 4.2 4.6 3.4 5.8 3.4 L6.2 1.8 L7.2 3.4 C9.5 3.6 11.5 5 12.2 7 L13.2 8.8 L12.2 9.6 C11.6 12.2 10 13.8 7.6 13.8 C4.6 13.8 2 12 2 9 C2 7.8 2.2 6.6 2.6 5.6Z" fill="#07121c"/><circle cx="7.8" cy="9.6" r="2.6" fill="none" stroke="#18b4ee" stroke-width="1.2"/><circle cx="8" cy="9.8" r="1.1" fill="#18b4ee"/><path d="M5.2 6 C6.6 5.2 8.4 5.2 9.8 5.8" stroke="#18b4ee" stroke-width="1.1" fill="none"/><circle cx="11" cy="7.8" r="0.8" fill="#18b4ee"/></svg>
<div class="t" style="left:843px;top:44px;font-size:12.5px;color:#000;letter-spacing:-0.25px">Node Editor - Octane RenderTarget</div>
<div class="ab" style="left:1460px;top:49px;width:11px;height:1px;background:#222;"></div>
<div class="ab" style="left:1505px;top:44px;width:10px;height:10px;background:transparent;border:1px solid #222"></div>
<svg class="ab" style="left:1549px;top:43px" width="12" height="12"><path d="M0.5 0.5 L11.5 11.5 M11.5 0.5 L0.5 11.5" stroke="#222" stroke-width="1.1"/></svg>
<div class="btn" style="left:820px;top:71px;width:78px;height:17px;background:#57565b;"><span class="bl" style="left:7px;line-height:17px;padding-top:1px;font-size:12px;color:#dedede;transform:scaleX(.86);transform-origin:0 0">Add Node</span><span class="arr" style="right:4px;top:6px"></span></div>
<div class="btn" style="left:905px;top:71px;width:78px;height:17px;background:#57565b;"><span class="bl" style="left:7px;line-height:17px;padding-top:1px;font-size:12px;color:#dedede;transform:scaleX(.86);transform-origin:0 0">Edit</span><span class="arr" style="right:4px;top:6px"></span></div>
<div class="btn" style="left:990px;top:71px;width:35px;height:17px;background:#57565b;"><span class="bl" style="left:5px;line-height:17px;padding-top:1px;font-size:12px;color:#dedede;transform:scaleX(.86);transform-origin:0 0">Undo</span></div>
<div class="btn" style="left:1032px;top:71px;width:35px;height:17px;background:#57565b;"><span class="bl" style="left:5px;line-height:17px;padding-top:1px;font-size:12px;color:#dedede;transform:scaleX(.86);transform-origin:0 0">Redo</span></div>
<div class="btn" style="left:1074px;top:71px;width:37px;height:17px;background:#57565b;"><span class="bl" style="left:5px;line-height:17px;padding-top:1px;font-size:12px;color:#dedede;transform:scaleX(.86);transform-origin:0 0">Purge</span></div>
<div class="btn" style="left:1315px;top:71px;width:78px;height:17px;background:#57565b;"><span class="bl" style="left:8px;line-height:17px;padding-top:1px;font-size:12px;color:#dedede;transform:scaleX(.86);transform-origin:0 0">Update</span></div>
<div class="btn" style="left:1400px;top:71px;width:78px;height:17px;background:#57565b;"><span class="bl" style="left:7px;line-height:17px;padding-top:1px;font-size:12px;color:#dedede;transform:scaleX(.86);transform-origin:0 0">Options</span></div>
<div class="btn" style="left:1485px;top:71px;width:23px;height:17px;background:#57565b;"></div>
<svg class="ab" style="left:1485px;top:66px" width="23" height="24"><path d="M4 18.5 L7.5 15.3" stroke="#e0e0e0" stroke-width="1"/><path d="M7.5 15.3 L14.8 8.6" stroke="#e0e0e0" stroke-width="3" stroke-dasharray="2.2 0.8"/><path d="M14.8 8.6 C16.8 7.2 18.6 9 18 11.6 L14.6 18.6" stroke="#e0e0e0" stroke-width="1.1" fill="none" stroke-dasharray="2 1"/></svg>
<div class="btn" style="left:1515px;top:71px;width:18px;height:17px;background:#57565b;"></div>
<div class="btn" style="left:1533px;top:71px;width:18px;height:17px;background:#57565b;"></div>
<svg class="ab" style="left:1515px;top:72px" width="18" height="16"><path d="M9 2 L9 14 M3 8 L15 8" stroke="#dcdcdc" stroke-width="1.3"/><path d="M9 1 L6.5 4 L11.5 4Z M9 15 L6.5 12 L11.5 12Z M2 8 L5 5.5 L5 10.5Z M16 8 L13 5.5 L13 10.5Z" fill="#dcdcdc"/></svg>
<svg class="ab" style="left:1535px;top:73px" width="16" height="15"><circle cx="6.5" cy="6" r="4.3" stroke="#dcdcdc" stroke-width="1.3" fill="none"/><path d="M9.5 9 L14 13.5" stroke="#dcdcdc" stroke-width="1.8"/></svg>
<div class="btn" style="left:1556px;top:71px;width:18px;height:17px;background:#57565b;"></div>
<svg class="ab" style="left:1561px;top:75px" width="8" height="10"><path d="M0 0 L7 5 L0 10Z" fill="#dcdcdc"/></svg>
<div class="ab" style="left:886px;top:95px;width:73px;height:17px;background:#57565b;clip-path:polygon(0 100%,0 2px,2px 0,57px 0,100% 100%)"></div>
<div class="t" style="left:895px;top:98px;font-size:12px;color:#dadada;transform:scaleX(0.86);transform-origin:0 0;">Node Flow</div>
<div class="ab" style="left:820px;top:95px;width:74px;height:17px;background:#2e2d30;clip-path:polygon(0 2px,2px 0,58.5px 0,73.5px 100%,0 100%)"></div>
<div class="ab" style="left:820px;top:95px;width:72px;height:17px;background:#4b6c93;clip-path:polygon(0 2px,2px 0,57px 0,100% 100%,0 100%)"></div>
<div class="t" style="left:829px;top:98px;font-size:12px;color:#e4e4e4;transform:scaleX(0.86);transform-origin:0 0;">Nodes</div>
<div class="btn" style="left:820px;top:118px;width:139px;height:18px;background:#2e2e30;border-radius:4px"></div>
<div class="btn" style="left:966px;top:119px;width:17px;height:17px;background:#57565b;"><span class="arr" style="right:4px;top:6px"></span></div>
<div class="btn" style="left:820px;top:143px;width:163px;height:17px;background:#57565b;"><span class="bl" style="left:7px;line-height:17px;padding-top:1px;font-size:12px;color:#dedede;transform:scaleX(.86);transform-origin:0 0">Add Selected Node(s)</span></div>
<div class="ab" style="left:820px;top:167px;width:139px;height:714px;background:#6e6e70;"></div>
<div class="ab" style="left:820px;top:167px;width:139px;height:16px;background:#4a4a4d;"></div>
<div class="t" style="left:835px;top:169px;font-size:12px;color:#e4e4e4;transform:scaleX(0.86);transform-origin:0 0;">Nodes</div>
<div class="ab" style="left:820px;top:198px;width:139px;height:1px;background:#737375;"></div>
<div class="t" style="left:835px;top:185px;font-size:12px;color:#101018;transform:scaleX(0.86);transform-origin:0 0;">2D Textures</div>
<div class="ab" style="left:820px;top:214px;width:139px;height:1px;background:#737375;"></div>
<div class="t" style="left:835px;top:201px;font-size:12px;color:#101018;transform:scaleX(0.86);transform-origin:0 0;">3D Textures</div>
<div class="ab" style="left:820px;top:230px;width:139px;height:1px;background:#737375;"></div>
<div class="t" style="left:835px;top:217px;font-size:12px;color:#101018;transform:scaleX(0.86);transform-origin:0 0;">Additional</div>
<div class="ab" style="left:820px;top:246px;width:139px;height:1px;background:#737375;"></div>
<div class="t" style="left:835px;top:233px;font-size:12px;color:#101018;transform:scaleX(0.86);transform-origin:0 0;">Constant</div>
<div class="ab" style="left:820px;top:262px;width:139px;height:1px;background:#737375;"></div>
<div class="t" style="left:835px;top:249px;font-size:12px;color:#101018;transform:scaleX(0.86);transform-origin:0 0;">Displacement</div>
<div class="ab" style="left:820px;top:278px;width:139px;height:1px;background:#737375;"></div>
<div class="t" style="left:835px;top:265px;font-size:12px;color:#101018;transform:scaleX(0.86);transform-origin:0 0;">FiberFX</div>
<div class="ab" style="left:820px;top:294px;width:139px;height:1px;background:#737375;"></div>
<div class="t" style="left:835px;top:281px;font-size:12px;color:#101018;transform:scaleX(0.86);transform-origin:0 0;">Flocking</div>
<div class="ab" style="left:820px;top:310px;width:139px;height:1px;background:#737375;"></div>
<div class="t" style="left:835px;top:297px;font-size:12px;color:#101018;transform:scaleX(0.86);transform-origin:0 0;">Functions</div>
<div class="ab" style="left:820px;top:326px;width:139px;height:1px;background:#737375;"></div>
<div class="t" style="left:835px;top:313px;font-size:12px;color:#101018;transform:scaleX(0.86);transform-origin:0 0;">Gradient</div>
<div class="ab" style="left:820px;top:342px;width:139px;height:1px;background:#737375;"></div>
<div class="t" style="left:835px;top:329px;font-size:12px;color:#101018;transform:scaleX(0.86);transform-origin:0 0;">Item Info</div>
<div class="ab" style="left:820px;top:358px;width:139px;height:1px;background:#737375;"></div>
<div class="t" style="left:835px;top:345px;font-size:12px;color:#101018;transform:scaleX(0.86);transform-origin:0 0;">Layers</div>
<div class="ab" style="left:820px;top:374px;width:139px;height:1px;background:#737375;"></div>
<div class="t" style="left:835px;top:361px;font-size:12px;color:#101018;transform:scaleX(0.86);transform-origin:0 0;">Material Tools</div>
<div class="ab" style="left:820px;top:390px;width:139px;height:1px;background:#737375;"></div>
<div class="t" style="left:835px;top:377px;font-size:12px;color:#101018;transform:scaleX(0.86);transform-origin:0 0;">Materials</div>
<div class="ab" style="left:820px;top:406px;width:139px;height:1px;background:#737375;"></div>
<div class="t" style="left:835px;top:393px;font-size:12px;color:#101018;transform:scaleX(0.86);transform-origin:0 0;">Math</div>
<div class="ab" style="left:820px;top:422px;width:139px;height:1px;background:#737375;"></div>
<div class="t" style="left:835px;top:409px;font-size:12px;color:#101018;transform:scaleX(0.86);transform-origin:0 0;">Octane Displacements</div>
<div class="ab" style="left:820px;top:438px;width:139px;height:1px;background:#737375;"></div>
<div class="t" style="left:835px;top:425px;font-size:12px;color:#101018;transform:scaleX(0.86);transform-origin:0 0;">Octane Emission</div>
<div class="ab" style="left:820px;top:454px;width:139px;height:1px;background:#737375;"></div>
<div class="t" style="left:835px;top:441px;font-size:12px;color:#101018;transform:scaleX(0.86);transform-origin:0 0;">Octane Materials</div>
<div class="ab" style="left:820px;top:470px;width:139px;height:1px;background:#737375;"></div>
<div class="t" style="left:844px;top:457px;width:133px;overflow:hidden;transform:scaleX(.86);transform-origin:0 0;font-size:12px;color:#101018">Octane Diffuse Material</div>
<div class="ab" style="left:820px;top:471px;width:139px;height:16px;background:#a9a9ab;"></div>
<div class="ab" style="left:820px;top:486px;width:139px;height:1px;background:#737375;"></div>
<div class="t" style="left:844px;top:473px;width:133px;overflow:hidden;transform:scaleX(.86);transform-origin:0 0;font-size:12px;color:#101018">Octane Glossy Material</div>
<div class="ab" style="left:820px;top:502px;width:139px;height:1px;background:#737375;"></div>
<div class="t" style="left:844px;top:489px;width:133px;overflow:hidden;transform:scaleX(.86);transform-origin:0 0;font-size:12px;color:#101018">Octane LightPortal Material</div>
<div class="ab" style="left:820px;top:518px;width:139px;height:1px;background:#737375;"></div>
<div class="t" style="left:844px;top:505px;width:133px;overflow:hidden;transform:scaleX(.86);transform-origin:0 0;font-size:12px;color:#101018">Octane LiveDB Material</div>
<div class="ab" style="left:820px;top:534px;width:139px;height:1px;background:#737375;"></div>
<div class="t" style="left:844px;top:521px;width:133px;overflow:hidden;transform:scaleX(.86);transform-origin:0 0;font-size:12px;color:#101018">Octane Material Mixer</div>
<div class="ab" style="left:820px;top:550px;width:139px;height:1px;background:#737375;"></div>
<div class="t" style="left:844px;top:537px;width:133px;overflow:hidden;transform:scaleX(.86);transform-origin:0 0;font-size:12px;color:#101018">Octane Metallic Material</div>
<div class="ab" style="left:820px;top:566px;width:139px;height:1px;background:#737375;"></div>
<div class="t" style="left:844px;top:553px;width:133px;overflow:hidden;transform:scaleX(.86);transform-origin:0 0;font-size:12px;color:#101018">Octane Specular Material</div>
<div class="ab" style="left:820px;top:582px;width:139px;height:1px;background:#737375;"></div>
<div class="t" style="left:835px;top:569px;font-size:12px;color:#101018;transform:scaleX(0.86);transform-origin:0 0;">Octane Medium</div>
<div class="ab" style="left:820px;top:598px;width:139px;height:1px;background:#737375;"></div>
<div class="t" style="left:835px;top:585px;font-size:12px;color:#101018;transform:scaleX(0.86);transform-origin:0 0;">Octane OSL</div>
<div class="ab" style="left:820px;top:614px;width:139px;height:1px;background:#737375;"></div>
<div class="t" style="left:835px;top:601px;font-size:12px;color:#101018;transform:scaleX(0.86);transform-origin:0 0;">Octane Procedurals</div>
<div class="ab" style="left:820px;top:630px;width:139px;height:1px;background:#737375;"></div>
<div class="t" style="left:835px;top:617px;font-size:12px;color:#101018;transform:scaleX(0.86);transform-origin:0 0;">Octane Projections</div>
<div class="ab" style="left:820px;top:646px;width:139px;height:1px;background:#737375;"></div>
<div class="t" style="left:835px;top:633px;font-size:12px;color:#101018;transform:scaleX(0.86);transform-origin:0 0;">Octane RenderTarget</div>
<div class="ab" style="left:820px;top:662px;width:139px;height:1px;background:#737375;"></div>
<div class="t" style="left:835px;top:649px;font-size:12px;color:#101018;transform:scaleX(0.86);transform-origin:0 0;">Octane Textures</div>
<div class="ab" style="left:820px;top:678px;width:139px;height:1px;background:#737375;"></div>
<div class="t" style="left:835px;top:665px;font-size:12px;color:#101018;transform:scaleX(0.86);transform-origin:0 0;">Octane Tools</div>
<div class="ab" style="left:820px;top:694px;width:139px;height:1px;background:#737375;"></div>
<div class="t" style="left:835px;top:681px;font-size:12px;color:#101018;transform:scaleX(0.86);transform-origin:0 0;">Octane Toon</div>
<div class="ab" style="left:820px;top:710px;width:139px;height:1px;background:#737375;"></div>
<div class="t" style="left:835px;top:697px;font-size:12px;color:#101018;transform:scaleX(0.86);transform-origin:0 0;">Octane Utilities</div>
<div class="ab" style="left:820px;top:726px;width:139px;height:1px;background:#737375;"></div>
<div class="t" style="left:835px;top:713px;font-size:12px;color:#101018;transform:scaleX(0.86);transform-origin:0 0;">Projections</div>
<div class="ab" style="left:820px;top:742px;width:139px;height:1px;background:#737375;"></div>
<div class="t" style="left:835px;top:729px;font-size:12px;color:#101018;transform:scaleX(0.86);transform-origin:0 0;">RayTrace</div>
<div class="ab" style="left:820px;top:758px;width:139px;height:1px;background:#737375;"></div>
<div class="t" style="left:835px;top:745px;font-size:12px;color:#101018;transform:scaleX(0.86);transform-origin:0 0;">Spot</div>
<div class="ab" style="left:820px;top:774px;width:139px;height:1px;background:#737375;"></div>
<div class="t" style="left:835px;top:761px;font-size:12px;color:#101018;transform:scaleX(0.86);transform-origin:0 0;">Tools</div>
<div class="ab" style="left:820px;top:790px;width:139px;height:1px;background:#737375;"></div>
<div class="t" style="left:835px;top:777px;font-size:12px;color:#101018;transform:scaleX(0.86);transform-origin:0 0;">Vertex Map</div>
<svg class="ab" style="left:0;top:0" width="1577" height="1050"><g fill="#111"><path d="M823 188 L829 191 L823 194Z"/><path d="M823 204 L829 207 L823 210Z"/><path d="M823 220 L829 223 L823 226Z"/><path d="M823 236 L829 239 L823 242Z"/><path d="M823 252 L829 255 L823 258Z"/><path d="M823 268 L829 271 L823 274Z"/><path d="M823 284 L829 287 L823 290Z"/><path d="M823 300 L829 303 L823 306Z"/><path d="M823 316 L829 319 L823 322Z"/><path d="M823 332 L829 335 L823 338Z"/><path d="M823 348 L829 351 L823 354Z"/><path d="M823 364 L829 367 L823 370Z"/><path d="M823 380 L829 383 L823 386Z"/><path d="M823 396 L829 399 L823 402Z"/><path d="M823 412 L829 415 L823 418Z"/><path d="M823 428 L829 431 L823 434Z"/><path d="M823 445 L829 445 L826 450Z"/><path d="M823 572 L829 575 L823 578Z"/><path d="M823 588 L829 591 L823 594Z"/><path d="M823 604 L829 607 L823 610Z"/><path d="M823 620 L829 623 L823 626Z"/><path d="M823 636 L829 639 L823 642Z"/><path d="M823 652 L829 655 L823 658Z"/><path d="M823 668 L829 671 L823 674Z"/><path d="M823 684 L829 687 L823 690Z"/><path d="M823 700 L829 703 L823 706Z"/><path d="M823 716 L829 719 L823 722Z"/><path d="M823 732 L829 735 L823 738Z"/><path d="M823 748 L829 751 L823 754Z"/><path d="M823 764 L829 767 L823 770Z"/><path d="M823 780 L829 783 L823 786Z"/></g></svg>
<div class="ab" style="left:966px;top:167px;width:17px;height:714px;background:#5a595e;border-radius:3px"></div>
<div class="ab" style="left:968px;top:515px;width:13px;height:1px;background:#222224;"></div>
<div class="ab" style="left:968px;top:516px;width:13px;height:1px;background:#b4b4b6;"></div>
<div class="ab" style="left:968px;top:520px;width:13px;height:1px;background:#222224;"></div>
<div class="ab" style="left:968px;top:521px;width:13px;height:1px;background:#b4b4b6;"></div>
<div class="ab" style="left:968px;top:526px;width:13px;height:1px;background:#222224;"></div>
<div class="ab" style="left:968px;top:527px;width:13px;height:1px;background:#b4b4b6;"></div>
<div class="ab" style="left:968px;top:531px;width:13px;height:1px;background:#222224;"></div>
<div class="ab" style="left:968px;top:532px;width:13px;height:1px;background:#b4b4b6;"></div>
<div class="ab" style="left:989px;top:94px;width:584px;height:763px;background:#353537;"></div>
<div class="ab" style="left:989px;top:862px;width:584px;height:19px;background:#2e2e30;border-radius:3px"></div>
<svg class="ab" style="left:989px;top:94px" width="584" height="763" viewBox="989 94 584 763" overflow="hidden">
<g fill="none" stroke-width="1.05">
<path d="M1311 94 L1358 240 C1366 268 1374 300 1384 335 C1390 346 1398 353 1410 355.5 L1426 356" stroke="#20e020"/>
<path d="M1270 255 C1320 290 1340 300 1370 312 C1395 322 1410 324 1426 324" stroke="#2a6a3a"/>
<path d="M989 213 L1008 216" stroke="#30b0d0"/>
<path d="M1118 258 L1220 305" stroke="#30b0d0"/>
<path d="M1275 325 C1320 332 1360 338 1390 340 L1426 340" stroke="#30b0d0"/>
<path d="M1275 328 C1330 335 1355 350 1380 362 C1395 370 1405 372 1426 372" stroke="#2848e0"/>
</g>
<g>
<path d="M1436 324 L1425 319 L1425 329Z" fill="#2a6a3a"/>
<path d="M1436 340 L1425 335 L1425 345Z" fill="#30b0d0"/>
<path d="M1436 356 L1425 351 L1425 361Z" fill="#20e020"/>
<path d="M1436 372 L1425 367 L1425 377Z" fill="#2848e0"/>
</g></svg>
<div class="ab" style="left:1007px;top:94px;width:269px;height:165px;background:#57565b;border:1px solid #1a1a1a;border-radius:3px;overflow:hidden;border-top:none;border-radius:0 0 3px 3px">
<div class="ab" style="left:0;top:20px;width:100%;height:1px;background:#505055"></div>
<div class="ab" style="left:3px;top:10px;width:7px;height:7px;background:#30f070;border:1px solid #111"></div>
<div class="t" style="left:15px;top:7px;font-size:12px;color:#e8e8e8;transform:scaleX(.86);transform-origin:0 0">Vignetting</div>
<div class="ab" style="left:0;top:36px;width:100%;height:1px;background:#505055"></div>
<div class="ab" style="left:3px;top:26px;width:7px;height:7px;background:#30f070;border:1px solid #111"></div>
<div class="t" style="left:15px;top:23px;font-size:12px;color:#e8e8e8;transform:scaleX(.86);transform-origin:0 0">Saturation</div>
<div class="ab" style="left:0;top:52px;width:100%;height:1px;background:#505055"></div>
<div class="ab" style="left:3px;top:42px;width:7px;height:7px;background:#30f070;border:1px solid #111"></div>
<div class="t" style="left:15px;top:39px;font-size:12px;color:#e8e8e8;transform:scaleX(.86);transform-origin:0 0">Hot Pixel Visibility</div>
<div class="ab" style="left:0;top:68px;width:100%;height:1px;background:#505055"></div>
<div class="ab" style="left:3px;top:58px;width:7px;height:7px;background:#f030f0;border:1px solid #111"></div>
<div class="t" style="left:15px;top:55px;font-size:12px;color:#e8e8e8;transform:scaleX(.86);transform-origin:0 0">Premultiplied Alpha</div>
<div class="ab" style="left:0;top:84px;width:100%;height:1px;background:#505055"></div>
<div class="ab" style="left:3px;top:74px;width:7px;height:7px;background:#f030f0;border:1px solid #111"></div>
<div class="t" style="left:15px;top:71px;font-size:12px;color:#e8e8e8;transform:scaleX(.86);transform-origin:0 0">Min. Display Samples</div>
<div class="ab" style="left:0;top:100px;width:100%;height:1px;background:#505055"></div>
<div class="ab" style="left:3px;top:90px;width:7px;height:7px;background:#f030f0;border:1px solid #111"></div>
<div class="t" style="left:15px;top:87px;font-size:12px;color:#e8e8e8;transform:scaleX(.86);transform-origin:0 0">Dithering</div>
<div class="ab" style="left:0;top:116px;width:100%;height:1px;background:#505055"></div>
<div class="ab" style="left:3px;top:106px;width:7px;height:7px;background:#30f070;border:1px solid #111"></div>
<div class="t" style="left:15px;top:103px;font-size:12px;color:#e8e8e8;transform:scaleX(.86);transform-origin:0 0">White Saturation</div>
<div class="ab" style="left:0;top:132px;width:100%;height:1px;background:#505055"></div>
<div class="ab" style="left:3px;top:122px;width:7px;height:7px;background:#f05020;border:1px solid #111"></div>
<div class="t" style="left:15px;top:119px;font-size:12px;color:#e8e8e8;transform:scaleX(.86);transform-origin:0 0">White Balance</div>
<div class="ab" style="left:0;top:148px;width:100%;height:1px;background:#505055"></div>
<div class="ab" style="left:3px;top:138px;width:7px;height:7px;background:#30f070;border:1px solid #111"></div>
<div class="t" style="left:15px;top:135px;font-size:12px;color:#e8e8e8;transform:scaleX(.86);transform-origin:0 0">Highlight Compression</div>
<div class="ab" style="left:0;top:164px;width:100%;height:1px;background:#505055"></div>
<div class="ab" style="left:3px;top:154px;width:7px;height:7px;background:#2848e0;border:1px solid #111"></div>
<div class="t" style="left:15px;top:151px;font-size:12px;color:#e8e8e8;transform:scaleX(.86);transform-origin:0 0">Custom LUT</div>
</div>
<div class="t" style="left:992px;top:96px;font-size:11px;color:#d0d0d0;letter-spacing:-0.2px">X:-488 Y:-63 Zoom:100%</div>
<div class="ab" style="left:1000px;top:285px;width:302px;height:287px;background:transparent;border:5px solid #b01a1a"></div>
<div class="ab" style="left:1018px;top:305px;width:260px;height:256px;background:#57565b;border:1px solid #5aaae8;border-radius:3px;overflow:hidden;">
<div class="ab" style="left:0;top:0;width:100%;height:15px;background:#1c1b3c"></div>
<div class="t" style="left:2px;top:1px;font-size:12px;font-weight:bold;color:#f0f0f0;transform:scaleX(.86);transform-origin:0 0">PMC Kernel (1)</div>
<svg class="ab" style="right:4px;top:4px" width="10" height="6"><path d="M0 0 L10 0 L5 6Z" fill="#0a0a0a"/></svg>
<div class="ab" style="left:0;top:30px;width:100%;height:1px;background:#505055"></div>
<div class="ab" style="left:3px;top:20px;width:7px;height:7px;background:#f030f0;border:1px solid #111"></div>
<div class="t" style="left:15px;top:17px;font-size:12px;color:#e8e8e8;transform:scaleX(.86);transform-origin:0 0">Max Diffuse Depth</div>
<div class="ab" style="left:0;top:46px;width:100%;height:1px;background:#505055"></div>
<div class="ab" style="left:3px;top:36px;width:7px;height:7px;background:#f030f0;border:1px solid #111"></div>
<div class="t" style="left:15px;top:33px;font-size:12px;color:#e8e8e8;transform:scaleX(.86);transform-origin:0 0">Max Glossy Depth</div>
<div class="ab" style="left:0;top:62px;width:100%;height:1px;background:#505055"></div>
<div class="ab" style="left:3px;top:52px;width:7px;height:7px;background:#30f070;border:1px solid #111"></div>
<div class="t" style="left:15px;top:49px;font-size:12px;color:#e8e8e8;transform:scaleX(.86);transform-origin:0 0">Ray Epsilon</div>
<div class="ab" style="left:0;top:78px;width:100%;height:1px;background:#505055"></div>
<div class="ab" style="left:3px;top:68px;width:7px;height:7px;background:#f030f0;border:1px solid #111"></div>
<div class="t" style="left:15px;top:65px;font-size:12px;color:#e8e8e8;transform:scaleX(.86);transform-origin:0 0">Max. Samples</div>
<div class="ab" style="left:0;top:94px;width:100%;height:1px;background:#505055"></div>
<div class="ab" style="left:3px;top:84px;width:7px;height:7px;background:#30f070;border:1px solid #111"></div>
<div class="t" style="left:15px;top:81px;font-size:12px;color:#e8e8e8;transform:scaleX(.86);transform-origin:0 0">Filter Size</div>
<div class="ab" style="left:0;top:110px;width:100%;height:1px;background:#505055"></div>
<div class="ab" style="left:3px;top:100px;width:7px;height:7px;background:#f030f0;border:1px solid #111"></div>
<div class="t" style="left:15px;top:97px;font-size:12px;color:#e8e8e8;transform:scaleX(.86);transform-origin:0 0">Alpha Shadows</div>
<div class="ab" style="left:0;top:126px;width:100%;height:1px;background:#505055"></div>
<div class="ab" style="left:3px;top:116px;width:7px;height:7px;background:#f030f0;border:1px solid #111"></div>
<div class="t" style="left:15px;top:113px;font-size:12px;color:#e8e8e8;transform:scaleX(.86);transform-origin:0 0">Alpha Channel</div>
<div class="ab" style="left:0;top:142px;width:100%;height:1px;background:#505055"></div>
<div class="ab" style="left:3px;top:132px;width:7px;height:7px;background:#f030f0;border:1px solid #111"></div>
<div class="t" style="left:15px;top:129px;font-size:12px;color:#e8e8e8;transform:scaleX(.86);transform-origin:0 0">Keep Environment</div>
<div class="ab" style="left:0;top:158px;width:100%;height:1px;background:#505055"></div>
<div class="ab" style="left:3px;top:148px;width:7px;height:7px;background:#30f070;border:1px solid #111"></div>
<div class="t" style="left:15px;top:145px;font-size:12px;color:#e8e8e8;transform:scaleX(.86);transform-origin:0 0">Caustic Blur</div>
<div class="ab" style="left:0;top:174px;width:100%;height:1px;background:#505055"></div>
<div class="ab" style="left:3px;top:164px;width:7px;height:7px;background:#30f070;border:1px solid #111"></div>
<div class="t" style="left:15px;top:161px;font-size:12px;color:#e8e8e8;transform:scaleX(.86);transform-origin:0 0">GI Clamp</div>
<div class="ab" style="left:0;top:190px;width:100%;height:1px;background:#505055"></div>
<div class="ab" style="left:3px;top:180px;width:7px;height:7px;background:#30f070;border:1px solid #111"></div>
<div class="t" style="left:15px;top:177px;font-size:12px;color:#e8e8e8;transform:scaleX(.86);transform-origin:0 0">Exploration Strength</div>
<div class="ab" style="left:0;top:206px;width:100%;height:1px;background:#505055"></div>
<div class="ab" style="left:3px;top:196px;width:7px;height:7px;background:#30f070;border:1px solid #111"></div>
<div class="t" style="left:15px;top:193px;font-size:12px;color:#e8e8e8;transform:scaleX(.86);transform-origin:0 0">Direct Light Importance</div>
<div class="ab" style="left:0;top:222px;width:100%;height:1px;background:#505055"></div>
<div class="ab" style="left:3px;top:212px;width:7px;height:7px;background:#f030f0;border:1px solid #111"></div>
<div class="t" style="left:15px;top:209px;font-size:12px;color:#e8e8e8;transform:scaleX(.86);transform-origin:0 0">Max. Rejects</div>
<div class="ab" style="left:0;top:238px;width:100%;height:1px;background:#505055"></div>
<div class="ab" style="left:3px;top:228px;width:7px;height:7px;background:#f030f0;border:1px solid #111"></div>
<div class="t" style="left:15px;top:225px;font-size:12px;color:#e8e8e8;transform:scaleX(.86);transform-origin:0 0">Parallelism</div>
<div class="ab" style="left:0;top:254px;width:100%;height:1px;background:#505055"></div>
<div class="ab" style="left:3px;top:244px;width:7px;height:7px;background:#30f070;border:1px solid #111"></div>
<div class="t" style="left:15px;top:241px;font-size:12px;color:#e8e8e8;transform:scaleX(.86);transform-origin:0 0">Path Term Power</div>
<div class="t" style="right:16px;top:17px;font-size:12px;color:#e8e8e8;transform:scaleX(.86);transform-origin:100% 0">OCTANE PMC Kernel</div>
<div class="ab" style="right:3px;top:20px;width:7px;height:7px;background:#2848e0;border:1px solid #141414"></div>
</div>
<div class="ab" style="left:1026px;top:574px;width:314px;height:240px;background:#57565b;border:1px solid #1a1a1a;border-radius:3px;overflow:hidden;">
<div class="ab" style="left:0;top:0;width:100%;height:15px;background:#1c1b3c"></div>
<div class="t" style="left:2px;top:1px;font-size:12px;font-weight:bold;color:#f0f0f0;transform:scaleX(.86);transform-origin:0 0">Path Tracing Kernel (1)</div>
<svg class="ab" style="right:4px;top:4px" width="10" height="6"><path d="M0 0 L10 0 L5 6Z" fill="#0a0a0a"/></svg>
<div class="ab" style="left:0;top:30px;width:100%;height:1px;background:#505055"></div>
<div class="ab" style="left:3px;top:20px;width:7px;height:7px;background:#f030f0;border:1px solid #111"></div>
<div class="t" style="left:15px;top:17px;font-size:12px;color:#e8e8e8;transform:scaleX(.86);transform-origin:0 0">Max Diffuse Depth</div>
<div class="ab" style="left:0;top:46px;width:100%;height:1px;background:#505055"></div>
<div class="ab" style="left:3px;top:36px;width:7px;height:7px;background:#f030f0;border:1px solid #111"></div>
<div class="t" style="left:15px;top:33px;font-size:12px;color:#e8e8e8;transform:scaleX(.86);transform-origin:0 0">Max Glossy Depth</div>
<div class="ab" style="left:0;top:62px;width:100%;height:1px;background:#505055"></div>
<div class="ab" style="left:3px;top:52px;width:7px;height:7px;background:#30f070;border:1px solid #111"></div>
<div class="t" style="left:15px;top:49px;font-size:12px;color:#e8e8e8;transform:scaleX(.86);transform-origin:0 0">Ray Epsilon</div>
<div class="ab" style="left:0;top:78px;width:100%;height:1px;background:#505055"></div>
<div class="ab" style="left:3px;top:68px;width:7px;height:7px;background:#f030f0;border:1px solid #111"></div>
<div class="t" style="left:15px;top:65px;font-size:12px;color:#e8e8e8;transform:scaleX(.86);transform-origin:0 0">Max. Samples</div>
<div class="ab" style="left:0;top:94px;width:100%;height:1px;background:#505055"></div>
<div class="ab" style="left:3px;top:84px;width:7px;height:7px;background:#30f070;border:1px solid #111"></div>
<div class="t" style="left:15px;top:81px;font-size:12px;color:#e8e8e8;transform:scaleX(.86);transform-origin:0 0">Filter Size</div>
<div class="ab" style="left:0;top:110px;width:100%;height:1px;background:#505055"></div>
<div class="ab" style="left:3px;top:100px;width:7px;height:7px;background:#f030f0;border:1px solid #111"></div>
<div class="t" style="left:15px;top:97px;font-size:12px;color:#e8e8e8;transform:scaleX(.86);transform-origin:0 0">Alpha Shadows</div>
<div class="ab" style="left:0;top:126px;width:100%;height:1px;background:#505055"></div>
<div class="ab" style="left:3px;top:116px;width:7px;height:7px;background:#f030f0;border:1px solid #111"></div>
<div class="t" style="left:15px;top:113px;font-size:12px;color:#e8e8e8;transform:scaleX(.86);transform-origin:0 0">Alpha Channel</div>
<div class="ab" style="left:0;top:142px;width:100%;height:1px;background:#505055"></div>
<div class="ab" style="left:3px;top:132px;width:7px;height:7px;background:#f030f0;border:1px solid #111"></div>
<div class="t" style="left:15px;top:129px;font-size:12px;color:#e8e8e8;transform:scaleX(.86);transform-origin:0 0">Keep Environment</div>
<div class="ab" style="left:0;top:158px;width:100%;height:1px;background:#505055"></div>
<div class="ab" style="left:3px;top:148px;width:7px;height:7px;background:#30f070;border:1px solid #111"></div>
<div class="t" style="left:15px;top:145px;font-size:12px;color:#e8e8e8;transform:scaleX(.86);transform-origin:0 0">Caustic Blur</div>
<div class="ab" style="left:0;top:174px;width:100%;height:1px;background:#505055"></div>
<div class="ab" style="left:3px;top:164px;width:7px;height:7px;background:#30f070;border:1px solid #111"></div>
<div class="t" style="left:15px;top:161px;font-size:12px;color:#e8e8e8;transform:scaleX(.86);transform-origin:0 0">GI Clamp</div>
<div class="ab" style="left:0;top:190px;width:100%;height:1px;background:#505055"></div>
<div class="ab" style="left:3px;top:180px;width:7px;height:7px;background:#30f070;border:1px solid #111"></div>
<div class="t" style="left:15px;top:177px;font-size:12px;color:#e8e8e8;transform:scaleX(.86);transform-origin:0 0">Path Term Power</div>
<div class="ab" style="left:0;top:206px;width:100%;height:1px;background:#505055"></div>
<div class="ab" style="left:3px;top:196px;width:7px;height:7px;background:#30f070;border:1px solid #111"></div>
<div class="t" style="left:15px;top:193px;font-size:12px;color:#e8e8e8;transform:scaleX(.86);transform-origin:0 0">Adapt. Noise Threshold</div>
<div class="ab" style="left:0;top:222px;width:100%;height:1px;background:#505055"></div>
<div class="ab" style="left:3px;top:212px;width:7px;height:7px;background:#30f070;border:1px solid #111"></div>
<div class="t" style="left:15px;top:209px;font-size:12px;color:#e8e8e8;transform:scaleX(.86);transform-origin:0 0">Adapt. Expected Exposure</div>
<div class="ab" style="left:0;top:238px;width:100%;height:1px;background:#505055"></div>
<div class="ab" style="left:3px;top:228px;width:7px;height:7px;background:#f030f0;border:1px solid #111"></div>
<div class="t" style="left:15px;top:225px;font-size:12px;color:#e8e8e8;transform:scaleX(.86);transform-origin:0 0">Adapt. Min Samples</div>
<div class="t" style="right:16px;top:17px;font-size:12px;color:#e8e8e8;transform:scaleX(.86);transform-origin:100% 0">OCTANE Path Tracing Kernel</div>
<div class="ab" style="right:3px;top:20px;width:7px;height:7px;background:#2848e0;border:1px solid #141414"></div>
</div>
<div class="ab" style="left:1437px;top:300px;width:128px;height:127px;background:#57565b;border:1px solid #1a1a1a;border-radius:3px;overflow:hidden;">
<div class="ab" style="left:0;top:0;width:100%;height:15px;background:#1c1b3c"></div>
<div class="t" style="left:2px;top:1px;font-size:12px;font-weight:bold;color:#f0f0f0;transform:scaleX(.86);transform-origin:0 0">Octane RenderTarget</div>
<svg class="ab" style="right:4px;top:4px" width="10" height="6"><path d="M0 0 L10 0 L5 6Z" fill="#0a0a0a"/></svg>
<div class="ab" style="left:0;top:30px;width:100%;height:1px;background:#505055"></div>
<div class="ab" style="left:3px;top:20px;width:7px;height:7px;background:#2e6a3e;border:1px solid #111"></div>
<div class="t" style="left:15px;top:17px;font-size:12px;color:#e8e8e8;transform:scaleX(.86);transform-origin:0 0">Camera</div>
<div class="ab" style="left:0;top:46px;width:100%;height:1px;background:#505055"></div>
<div class="ab" style="left:3px;top:36px;width:7px;height:7px;background:#30b0d0;border:1px solid #111"></div>
<div class="t" style="left:15px;top:33px;font-size:12px;color:#e8e8e8;transform:scaleX(.86);transform-origin:0 0">Environment</div>
<div class="ab" style="left:0;top:62px;width:100%;height:1px;background:#505055"></div>
<div class="ab" style="left:3px;top:52px;width:7px;height:7px;background:#30d030;border:1px solid #111"></div>
<div class="t" style="left:15px;top:49px;font-size:12px;color:#e8e8e8;transform:scaleX(.86);transform-origin:0 0">Imager</div>
<div class="ab" style="left:0;top:78px;width:100%;height:1px;background:#505055"></div>
<div class="ab" style="left:3px;top:68px;width:7px;height:7px;background:#2848e0;border:1px solid #111"></div>
<div class="t" style="left:15px;top:65px;font-size:12px;color:#e8e8e8;transform:scaleX(.86);transform-origin:0 0">Kernel</div>
<div class="ab" style="left:0;top:94px;width:100%;height:1px;background:#505055"></div>
<div class="ab" style="left:3px;top:84px;width:7px;height:7px;background:#30d030;border:1px solid #111"></div>
<div class="t" style="left:15px;top:81px;font-size:12px;color:#e8e8e8;transform:scaleX(.86);transform-origin:0 0">Post Processing</div>
<div class="ab" style="left:0;top:110px;width:100%;height:1px;background:#505055"></div>
<div class="ab" style="left:3px;top:100px;width:7px;height:7px;background:#2e6a3e;border:1px solid #111"></div>
<div class="t" style="left:15px;top:97px;font-size:12px;color:#e8e8e8;transform:scaleX(.86);transform-origin:0 0">Render Passes</div>
<div class="ab" style="left:0;top:126px;width:100%;height:1px;background:#505055"></div>
<div class="ab" style="left:3px;top:116px;width:7px;height:7px;background:#30b0d0;border:1px solid #111"></div>
<div class="t" style="left:15px;top:113px;font-size:12px;color:#e8e8e8;transform:scaleX(.86);transform-origin:0 0">Visible Environment</div>
</div>
<div class="ab" style="left:1573px;top:94px;width:2px;height:763px;background:#2a2a2c;"></div>
<div class="ab" style="left:0px;top:1010px;width:1577px;height:40px;background:#101010;"></div>
<svg class="ab" style="left:0;top:1020px" width="10" height="20"><path d="M0 1.5 L8 0.5 V9 H0Z M0 10.5 H8 V19 L0 18Z" fill="#fff"/></svg>
<svg class="ab" style="left:38px;top:1021px" width="20" height="20"><circle cx="11.5" cy="7.5" r="6" stroke="#fff" stroke-width="1.5" fill="none"/><path d="M7 12 L1 18" stroke="#fff" stroke-width="1.8"/></svg>
<svg class="ab" style="left:85px;top:1022px" width="22" height="18"><rect x="3.5" y="1.5" width="15" height="15" stroke="#fff" stroke-width="1.3" fill="none"/><path d="M1 4 V14 M21 4 V14" stroke="#fff" stroke-width="1.3"/></svg>
<svg class="ab" style="left:136px;top:1018px" width="24" height="24" viewBox="0 0 24 24"><path d="M3 13 C3 5 9 2 13 2 C19 2 22 6 22 12 L22 14 H8 C8 18 11 20 14 20 C17 20 19 19 21 18 V22 C19 23 16 23.5 13.5 23.5 C7 23.5 3 19 3 13Z M8 10.5 H17 C17 7 15 5.5 12.5 5.5 C10 5.5 8.3 7.5 8 10.5Z" fill="#1e7fd8"/></svg>
<svg class="ab" style="left:184px;top:1019px" width="23" height="22"><path d="M1 3 H8 L10 5 H22 V20 H1Z" fill="#e8b830"/><rect x="1" y="7" width="21" height="13" fill="#f8d050"/><rect x="6" y="12" width="11" height="6" fill="#2890e0"/><rect x="8" y="14" width="7" height="6" fill="#f8d050"/></svg>
<div class="ab" style="left:177px;top:1047px;width:37px;height:3px;background:#76b9ed;"></div>
<svg class="ab" style="left:233px;top:1019px" width="22" height="22" viewBox="0 0 22 22"><circle cx="11" cy="11" r="10.5" fill="#db4437"/><path d="M11 11 L1.9 5.8 A10.5 10.5 0 0 0 11 21.5Z" fill="#0f9d58"/><path d="M11 11 L20.1 5.8 A10.5 10.5 0 0 1 11 21.5Z" fill="#f4b400"/><circle cx="11" cy="11" r="5" fill="#fff"/><circle cx="11" cy="11" r="3.8" fill="#4285f4"/></svg>
<svg class="ab" style="left:282px;top:1019px" width="22" height="22"><rect x="0.5" y="0.5" width="21" height="21" fill="#001d34" stroke="#31c5f0" stroke-width="1.5"/><text x="4" y="16" font-family="Liberation Sans" font-weight="bold" font-size="11" fill="#31c5f0">Ps</text></svg>
<div class="ab" style="left:274px;top:1047px;width:37px;height:3px;background:#76b9ed;"></div>
<svg class="ab" style="left:330px;top:1018px" width="24" height="24"><rect width="24" height="24" fill="#e8e8e8"/><path d="M5 20 L10 12 L7 9 L12 5 L15 8 M10 12 L16 14 L19 20 M12 5 L17 4" stroke="#222" stroke-width="2" fill="none"/><circle cx="15" cy="3.5" r="2" fill="#222"/></svg>
<svg class="ab" style="left:380px;top:1019px" width="24" height="22"><path d="M2 2 L9 11 L2 20 M22 2 L15 11 L22 20" stroke="#8a8a8a" stroke-width="3" fill="none"/><text x="5" y="15" font-family="Liberation Sans" font-weight="bold" font-size="10" fill="#ddd">DC</text></svg>
<div class="ab" style="left:428px;top:1018px;width:24px;height:24px;background:#000;"></div>
<svg class="ab" style="left:428px;top:1019px" width="24" height="22"><path d="M2 20 C6 14 8 8 10 2 C11 8 12 12 13 20Z M9 20 C12 14 14 9 16 4 C17 9 17 14 18 20Z M15 20 C17 16 19 12 21 8 C22 12 22 16 22 20Z" fill="#f0f0f0"/></svg>
<svg class="ab" style="left:479px;top:1018px" width="20" height="24"><rect x="0.5" y="0.5" width="19" height="23" fill="#fff"/><g fill="#111"><rect x="3" y="3" width="14" height="4"/><rect x="3" y="9" width="3" height="3"/><rect x="8" y="9" width="3" height="3"/><rect x="13" y="9" width="3" height="3"/><rect x="3" y="14" width="3" height="3"/><rect x="8" y="14" width="3" height="3"/><rect x="13" y="14" width="3" height="3"/><rect x="3" y="19" width="3" height="3"/><rect x="8" y="19" width="3" height="3"/><rect x="13" y="19" width="3" height="3"/></g></svg>
<svg class="ab" style="left:526px;top:1018px" width="24" height="24"><circle cx="12" cy="12" r="11.5" fill="#5fb336"/><text x="4" y="19" font-family="Liberation Sans" font-weight="bold" font-size="18" fill="#fff">μ</text></svg>
<div class="ab" style="left:519px;top:1047px;width:40px;height:3px;background:#76b9ed;"></div>
<svg class="ab" style="left:576px;top:1019px" width="22" height="22"><text x="1" y="8" font-family="Liberation Sans" font-size="6" fill="#ddd">EVGA</text><text x="0" y="17" font-family="Liberation Sans" font-weight="bold" font-size="10" fill="#eee">LED</text><rect x="1" y="19" width="20" height="1" fill="#aaa"/></svg>
<div class="ab" style="left:568px;top:1047px;width:40px;height:3px;background:#76b9ed;"></div>
<div class="ab" style="left:613px;top:1010px;width:47px;height:40px;background:#303030;"></div>
<svg class="ab" style="left:624px;top:1018px" width="24" height="24" viewBox="0 0 16 16"><circle cx="8" cy="8" r="7.8" fill="#20b0f0"/><path d="M2.6 5.6 C3.4 4.2 4.6 3.4 5.8 3.4 L6.2 1.8 L7.2 3.4 C9.5 3.6 11.5 5 12.2 7 L13.2 8.8 L12.2 9.6 C11.6 12.2 10 13.8 7.6 13.8 C4.6 13.8 2 12 2 9 C2 7.8 2.2 6.6 2.6 5.6Z" fill="#07121c"/><circle cx="7.8" cy="9.6" r="2.6" fill="none" stroke="#20b0f0" stroke-width="1.2"/><circle cx="8" cy="9.8" r="1.1" fill="#20b0f0"/><path d="M5.2 6 C6.6 5.2 8.4 5.2 9.8 5.8" stroke="#20b0f0" stroke-width="1.1" fill="none"/><circle cx="11" cy="7.8" r="0.8" fill="#20b0f0"/></svg>
<div class="ab" style="left:613px;top:1047px;width:47px;height:3px;background:#76b9ed;"></div>
<svg class="ab" style="left:673px;top:1018px" width="24" height="24" viewBox="0 0 16 16"><circle cx="8" cy="8" r="7.8" fill="#f0a020"/><path d="M2.6 5.6 C3.4 4.2 4.6 3.4 5.8 3.4 L6.2 1.8 L7.2 3.4 C9.5 3.6 11.5 5 12.2 7 L13.2 8.8 L12.2 9.6 C11.6 12.2 10 13.8 7.6 13.8 C4.6 13.8 2 12 2 9 C2 7.8 2.2 6.6 2.6 5.6Z" fill="#07121c"/><circle cx="7.8" cy="9.6" r="2.6" fill="none" stroke="#f0a020" stroke-width="1.2"/><circle cx="8" cy="9.8" r="1.1" fill="#f0a020"/><path d="M5.2 6 C6.6 5.2 8.4 5.2 9.8 5.8" stroke="#f0a020" stroke-width="1.1" fill="none"/><circle cx="11" cy="7.8" r="0.8" fill="#f0a020"/></svg>
<div class="ab" style="left:665px;top:1047px;width:40px;height:3px;background:#76b9ed;"></div>
<svg class="ab" style="left:1393px;top:1020px" width="20" height="20"><circle cx="12" cy="5" r="3" stroke="#fff" stroke-width="1.2" fill="none"/><path d="M6 17 C6 12 9 10 12 10 C15 10 18 12 18 17 M2 18 C2 14 4 12 7 12" stroke="#fff" stroke-width="1.2" fill="none"/><circle cx="6" cy="9" r="2.5" stroke="#fff" stroke-width="1.2" fill="none"/></svg>
<svg class="ab" style="left:1430px;top:1025px" width="14" height="9"><path d="M1 8 L7 2 L13 8" stroke="#fff" stroke-width="1.3" fill="none"/></svg>
<svg class="ab" style="left:1453px;top:1021px" width="20" height="18"><rect x="1" y="1" width="16" height="11" stroke="#fff" stroke-width="1.2" fill="none"/><path d="M9 12 V16 M4 16 H14" stroke="#fff" stroke-width="1.2"/><rect x="0" y="0" width="6" height="6" fill="#101010" stroke="#fff" stroke-width="1"/></svg>
<svg class="ab" style="left:1477px;top:1021px" width="20" height="18"><path d="M1 6 H4 L9 2 V16 L4 12 H1Z" stroke="#fff" stroke-width="1.2" fill="none"/><path d="M12 6 C13 8 13 10 12 12 M14.5 4 C16.5 7 16.5 11 14.5 14 M17 2 C20 6 20 12 17 16" stroke="#fff" stroke-width="1.1" fill="none"/></svg>
<div class="t" style="left:1504px;top:1016px;font-size:12px;color:#fff;">POR</div>
<div class="t" style="left:1501px;top:1033px;font-size:12px;color:#fff;">PTB2</div>
<div class="t" style="left:1554px;top:1016px;font-size:12px;color:#fff;">08:11</div>
<div class="t" style="left:1539px;top:1033px;font-size:12px;color:#fff;">07/03/2018</div>
</body></html>
